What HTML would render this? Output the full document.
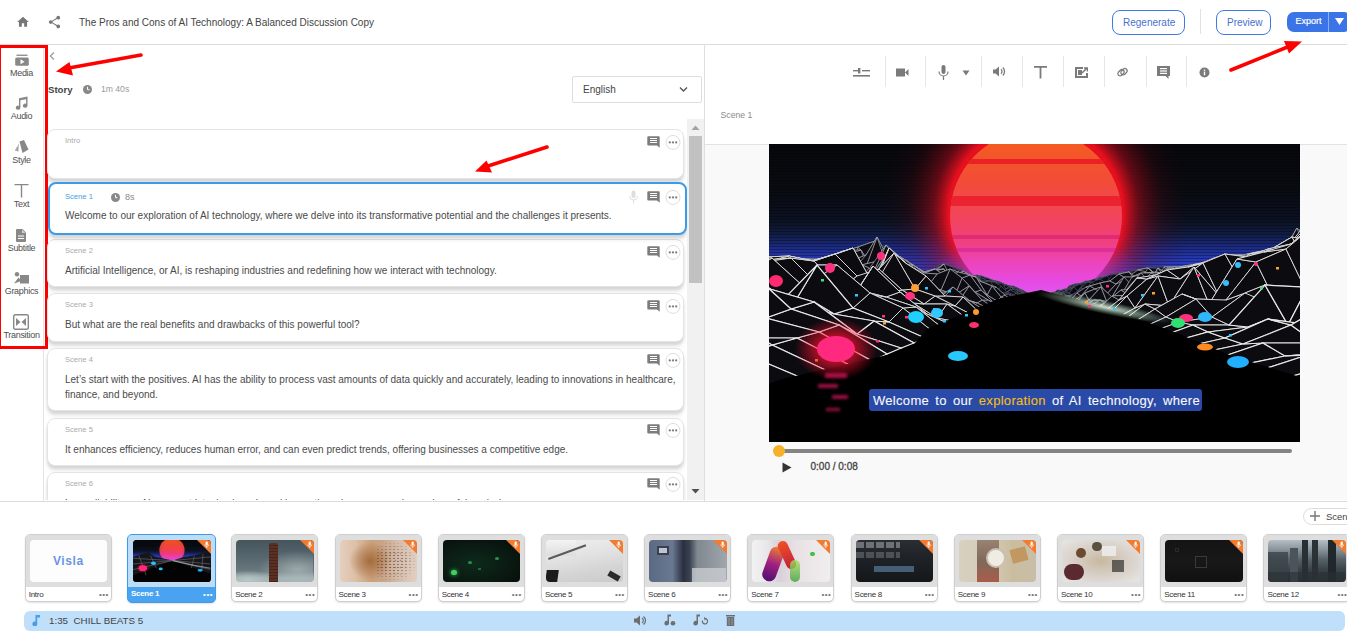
<!DOCTYPE html>
<html><head><meta charset="utf-8">
<style>
*{box-sizing:border-box;margin:0;padding:0}
html,body{width:1347px;height:638px;overflow:hidden;background:#fff;font-family:"Liberation Sans",sans-serif;color:#444;position:relative}
.a{position:absolute}
.t{position:absolute;white-space:nowrap;line-height:1}
.sep{position:absolute;width:1px;background:#e2e2e2}
.card{position:absolute;left:47px;width:637px;background:#fff;border:1px solid #e4e4e4;border-radius:8px;box-shadow:0 3px 3px rgba(0,0,0,.12),0 6px 4px rgba(0,0,0,.05)}
.lbl{position:absolute;left:17px;font-size:7.6px;color:#aaa;line-height:1;white-space:nowrap}
.txt{position:absolute;left:17px;font-size:10px;color:#4a4a4a;line-height:14.5px;white-space:nowrap}
.sb{position:absolute;left:0;width:43px;text-align:center;font-size:9px;letter-spacing:-0.3px;color:#505050;line-height:1}
.th{position:absolute;top:534px;width:87px;height:68px;border:1px solid #cfcfcf;border-radius:5px;background:#fff;box-shadow:0 1px 2px rgba(0,0,0,.12);overflow:hidden}
.th .fr{position:absolute;left:0;top:0;right:0;height:52px;background:#dedede}
.th .im{position:absolute;left:4px;top:5px;width:77.5px;height:42px;border-radius:4px;overflow:hidden}
.th .nm{position:absolute;left:3px;top:55.5px;font-size:8px;letter-spacing:-0.3px;color:#333;line-height:1;white-space:nowrap}
.th .dt{position:absolute;right:2px;top:56px;font-size:8px;color:#777;letter-spacing:0.5px;line-height:1}
.th .cor{position:absolute;right:0;top:0;width:0;height:0;border-style:solid;border-width:0 14px 14px 0;border-color:transparent #f27b2f transparent transparent}
</style></head><body>

<!-- HEADER -->
<div class="a" style="left:0;top:44px;width:1347px;height:1px;background:#dcdcdc"></div>
<svg class="a" style="left:16px;top:15px" width="14" height="14" viewBox="0 0 24 24"><path fill="#777" d="M10 20v-6h4v6h5v-8h3L12 3 2 12h3v8z"/></svg>
<svg class="a" style="left:47px;top:14px" width="15" height="16" viewBox="0 0 24 24"><path fill="#777" d="M18 16.08c-.76 0-1.44.3-1.96.77L8.91 12.7c.05-.23.09-.46.09-.7s-.04-.47-.09-.7l7.05-4.11c.54.5 1.25.81 2.04.81 1.66 0 3-1.34 3-3s-1.34-3-3-3-3 1.34-3 3c0 .24.04.47.09.7L8.04 9.81C7.5 9.31 6.79 9 6 9c-1.66 0-3 1.34-3 3s1.34 3 3 3c.79 0 1.5-.31 2.04-.81l7.12 4.16c-.05.21-.08.43-.08.65 0 1.61 1.31 2.92 2.92 2.92 1.61 0 2.92-1.31 2.92-2.92s-1.31-2.92-2.92-2.92z"/></svg>
<div class="t" style="left:79px;top:17.5px;font-size:10px;color:#444">The Pros and Cons of AI Technology: A Balanced Discussion Copy</div>

<div class="a" style="left:1112px;top:10px;width:73px;height:25px;border:1px solid #3d7be6;border-radius:8px"></div>
<div class="t" style="left:1123px;top:18px;font-size:10px;color:#4a6fd0">Regenerate</div>
<div class="sep" style="left:1200px;top:9px;height:25px"></div>
<div class="a" style="left:1216px;top:10px;width:55px;height:25px;border:1px solid #3d7be6;border-radius:8px"></div>
<div class="t" style="left:1227px;top:18px;font-size:10px;color:#4a6fd0">Preview</div>
<div class="a" style="left:1287px;top:12px;width:64px;height:20px;background:#3b74e6;border-radius:7px"></div>
<div class="a" style="left:1328px;top:12px;width:1px;height:20px;background:#8fb0f0"></div>
<div class="t" style="left:1295.5px;top:16.5px;font-size:9px;color:#fff;-webkit-text-stroke:0.2px #fff">Export</div>
<svg class="a" style="left:1335px;top:18px" width="9" height="7" viewBox="0 0 9 7"><path fill="#fff" d="M0 0h9L4.5 7z"/></svg>

<!-- SIDEBAR -->
<div class="a" style="left:43px;top:45px;width:1px;height:456px;background:#e4e4e4"></div>


<svg class="a" style="left:14.5px;top:54px" width="14" height="12" viewBox="0 0 14 12"><rect x="1.5" y="0.6" width="11" height="1.3" fill="#888"/><rect x="0.2" y="3.6" width="13.6" height="8.2" rx="1.5" fill="#888"/><path d="M5.5 5.2v5l4-2.5z" fill="#fff"/></svg>
<div class="sb" style="top:69px">Media</div>
<svg class="a" style="left:15px;top:96px" width="13" height="14" viewBox="0 0 13 14"><path fill="#888" d="M4 2.2L12.5 0.5v9.2a2.3 2.1 0 1 1-1.4-1.9V3.2L5.4 4.3v7.3A2.3 2.1 0 1 1 4 9.7z"/></svg>
<div class="sb" style="top:112px">Audio</div>
<svg class="a" style="left:14px;top:140px" width="15" height="13" viewBox="0 0 15 13"><path fill="#888" d="M5.5 1.5L10 0l4.5 9.5-6 3.5z"/><path fill="#999" d="M4.8 3.2L2 10.5l2.3 1.2z"/><path fill="#aaa" d="M3.6 5.5L0.8 10.5l1.4.6z"/></svg>
<div class="sb" style="top:156px">Style</div>
<svg class="a" style="left:14px;top:184px" width="15" height="14" viewBox="0 0 15 14"><path fill="#888" d="M0.5 0h14v1.3H8.2V13.5H6.8V1.3H0.5z"/></svg>
<div class="sb" style="top:200px">Text</div>
<svg class="a" style="left:16px;top:229px" width="10" height="13" viewBox="0 0 10 13"><path fill="#888" d="M1 0h5.5L10 3.5V12a1 1 0 0 1-1 1H1a1 1 0 0 1-1-1V1a1 1 0 0 1 1-1z"/><path fill="#fff" d="M6 .5v3.5h3.5z" opacity=".6"/><rect x="2" y="6.5" width="6" height="1" fill="#fff"/><rect x="2" y="9" width="6" height="1" fill="#fff"/></svg>
<div class="sb" style="top:244px">Subtitle</div>
<svg class="a" style="left:14px;top:272px" width="15" height="12" viewBox="0 0 15 12"><circle cx="3" cy="2.2" r="2.2" fill="#888"/><path fill="#888" d="M0 11.5l4.5-6 3 3.5z"/><rect x="6" y="3" width="9" height="8.5" fill="#888"/></svg>
<div class="sb" style="top:287px">Graphics</div>
<svg class="a" style="left:13px;top:314px" width="16" height="16" viewBox="0 0 16 16"><rect x="0.7" y="0.7" width="14.6" height="14.6" rx="1.5" fill="none" stroke="#888" stroke-width="1.4"/><path fill="#888" d="M3 4l4.5 4L3 12zM13 4L8.5 8 13 12z"/></svg>
<div class="sb" style="top:331px">Transition</div>
<!-- red box -->
<div class="a" style="left:-2px;top:45px;width:50px;height:304px;border:3px solid #f00;border-left-width:3px"></div>


<!-- STORY PANEL -->
<div class="a" style="left:44px;top:45px;width:660px;height:455px;overflow:hidden">
<div class="a" style="left:-44px;top:-45px;width:1347px;height:638px">
<svg class="a" style="left:49px;top:52px" width="6" height="8" viewBox="0 0 6 8"><path d="M5 0.5L1.3 4 5 7.5" fill="none" stroke="#999" stroke-width="1.2"/></svg>
<div class="t" style="left:48px;top:84.5px;font-size:9.6px;font-weight:bold;color:#444">Story</div>
<svg class="a" style="left:83px;top:85px" width="9" height="9" viewBox="0 0 9 9"><circle cx="4.5" cy="4.5" r="4.5" fill="#888"/><path d="M4.5 1.8v2.9h2" fill="none" stroke="#fff" stroke-width="1"/></svg>
<div class="t" style="left:101px;top:84.8px;font-size:8.6px;color:#999">1m 40s</div>
<div class="a" style="left:572px;top:76px;width:130px;height:27px;border:1px solid #dedede;border-radius:2px"></div>
<div class="t" style="left:583px;top:85px;font-size:10px;color:#444">English</div>
<svg class="a" style="left:679px;top:86px" width="9" height="7" viewBox="0 0 9 7"><path d="M1 1.5l3.5 3.5L8 1.5" fill="none" stroke="#555" stroke-width="1.4"/></svg>
<div class="card" style="top:129px;height:50px">
<div class="lbl" style="top:6.8px">Intro</div>
</div>
<svg class="a" style="left:647px;top:136px" width="13" height="12" viewBox="0 0 13 12"><path fill="#7c7c7c" d="M1.3 0.3h10.4a1 1 0 0 1 1 1V11.8L10 9.5H1.3a1 1 0 0 1-1-1V1.3a1 1 0 0 1 1-1z"/><rect x="3" y="2" width="7" height="1" fill="#fff"/><rect x="3" y="4" width="7" height="1" fill="#fff"/><rect x="3" y="6" width="7" height="1" fill="#fff"/></svg><svg class="a" style="left:665px;top:134px" width="16" height="16" viewBox="0 0 16 16"><circle cx="8" cy="8.4" r="7" fill="#fff" stroke="#dedede" stroke-width="1"/><circle cx="4.8" cy="8.4" r="1.15" fill="#808080"/><circle cx="8" cy="8.4" r="1.15" fill="#808080"/><circle cx="11.2" cy="8.4" r="1.15" fill="#808080"/></svg>
<div class="card" style="top:239px;height:48px">
<div class="lbl" style="top:6.8px">Scene 2</div>
<div class="txt" style="top:24px">Artificial Intelligence, or AI, is reshaping industries and redefining how we interact with technology.</div>
</div>
<svg class="a" style="left:647px;top:246px" width="13" height="12" viewBox="0 0 13 12"><path fill="#7c7c7c" d="M1.3 0.3h10.4a1 1 0 0 1 1 1V11.8L10 9.5H1.3a1 1 0 0 1-1-1V1.3a1 1 0 0 1 1-1z"/><rect x="3" y="2" width="7" height="1" fill="#fff"/><rect x="3" y="4" width="7" height="1" fill="#fff"/><rect x="3" y="6" width="7" height="1" fill="#fff"/></svg><svg class="a" style="left:665px;top:244px" width="16" height="16" viewBox="0 0 16 16"><circle cx="8" cy="8.4" r="7" fill="#fff" stroke="#dedede" stroke-width="1"/><circle cx="4.8" cy="8.4" r="1.15" fill="#808080"/><circle cx="8" cy="8.4" r="1.15" fill="#808080"/><circle cx="11.2" cy="8.4" r="1.15" fill="#808080"/></svg>
<div class="card" style="top:293px;height:49px">
<div class="lbl" style="top:6.8px">Scene 3</div>
<div class="txt" style="top:24px">But what are the real benefits and drawbacks of this powerful tool?</div>
</div>
<svg class="a" style="left:647px;top:300px" width="13" height="12" viewBox="0 0 13 12"><path fill="#7c7c7c" d="M1.3 0.3h10.4a1 1 0 0 1 1 1V11.8L10 9.5H1.3a1 1 0 0 1-1-1V1.3a1 1 0 0 1 1-1z"/><rect x="3" y="2" width="7" height="1" fill="#fff"/><rect x="3" y="4" width="7" height="1" fill="#fff"/><rect x="3" y="6" width="7" height="1" fill="#fff"/></svg><svg class="a" style="left:665px;top:298px" width="16" height="16" viewBox="0 0 16 16"><circle cx="8" cy="8.4" r="7" fill="#fff" stroke="#dedede" stroke-width="1"/><circle cx="4.8" cy="8.4" r="1.15" fill="#808080"/><circle cx="8" cy="8.4" r="1.15" fill="#808080"/><circle cx="11.2" cy="8.4" r="1.15" fill="#808080"/></svg>
<div class="card" style="top:348px;height:63px">
<div class="lbl" style="top:6.8px">Scene 4</div>
<div class="txt" style="top:24px">Let’s start with the positives. AI has the ability to process vast amounts of data quickly and accurately, leading to innovations in healthcare,</div>
<div class="txt" style="top:38.5px">finance, and beyond.</div>
</div>
<svg class="a" style="left:647px;top:354px" width="13" height="12" viewBox="0 0 13 12"><path fill="#7c7c7c" d="M1.3 0.3h10.4a1 1 0 0 1 1 1V11.8L10 9.5H1.3a1 1 0 0 1-1-1V1.3a1 1 0 0 1 1-1z"/><rect x="3" y="2" width="7" height="1" fill="#fff"/><rect x="3" y="4" width="7" height="1" fill="#fff"/><rect x="3" y="6" width="7" height="1" fill="#fff"/></svg><svg class="a" style="left:665px;top:352px" width="16" height="16" viewBox="0 0 16 16"><circle cx="8" cy="8.4" r="7" fill="#fff" stroke="#dedede" stroke-width="1"/><circle cx="4.8" cy="8.4" r="1.15" fill="#808080"/><circle cx="8" cy="8.4" r="1.15" fill="#808080"/><circle cx="11.2" cy="8.4" r="1.15" fill="#808080"/></svg>
<div class="card" style="top:418px;height:48px">
<div class="lbl" style="top:6.8px">Scene 5</div>
<div class="txt" style="top:24px">It enhances efficiency, reduces human error, and can even predict trends, offering businesses a competitive edge.</div>
</div>
<svg class="a" style="left:647px;top:424px" width="13" height="12" viewBox="0 0 13 12"><path fill="#7c7c7c" d="M1.3 0.3h10.4a1 1 0 0 1 1 1V11.8L10 9.5H1.3a1 1 0 0 1-1-1V1.3a1 1 0 0 1 1-1z"/><rect x="3" y="2" width="7" height="1" fill="#fff"/><rect x="3" y="4" width="7" height="1" fill="#fff"/><rect x="3" y="6" width="7" height="1" fill="#fff"/></svg><svg class="a" style="left:665px;top:422px" width="16" height="16" viewBox="0 0 16 16"><circle cx="8" cy="8.4" r="7" fill="#fff" stroke="#dedede" stroke-width="1"/><circle cx="4.8" cy="8.4" r="1.15" fill="#808080"/><circle cx="8" cy="8.4" r="1.15" fill="#808080"/><circle cx="11.2" cy="8.4" r="1.15" fill="#808080"/></svg>
<div class="card" style="top:472px;height:48px">
<div class="lbl" style="top:6.8px">Scene 6</div>
<div class="txt" style="top:24px">Low reliability on AI may restrict a business’s real innovation, sincere reasoning and careful analysis.</div>
</div>
<svg class="a" style="left:647px;top:478px" width="13" height="12" viewBox="0 0 13 12"><path fill="#7c7c7c" d="M1.3 0.3h10.4a1 1 0 0 1 1 1V11.8L10 9.5H1.3a1 1 0 0 1-1-1V1.3a1 1 0 0 1 1-1z"/><rect x="3" y="2" width="7" height="1" fill="#fff"/><rect x="3" y="4" width="7" height="1" fill="#fff"/><rect x="3" y="6" width="7" height="1" fill="#fff"/></svg><svg class="a" style="left:665px;top:476px" width="16" height="16" viewBox="0 0 16 16"><circle cx="8" cy="8.4" r="7" fill="#fff" stroke="#dedede" stroke-width="1"/><circle cx="4.8" cy="8.4" r="1.15" fill="#808080"/><circle cx="8" cy="8.4" r="1.15" fill="#808080"/><circle cx="11.2" cy="8.4" r="1.15" fill="#808080"/></svg>
<div class="card" style="top:182px;left:48px;width:639px;height:53px;border:2px solid #3a9be8;border-radius:8px">
<div class="lbl" style="top:8.5px;left:15px;color:#3aa0e0">Scene 1</div>
<svg class="a" style="left:61px;top:9px" width="9" height="9" viewBox="0 0 9 9"><circle cx="4.5" cy="4.5" r="4.5" fill="#888"/><path d="M4.5 1.8v2.9h2" fill="none" stroke="#fff" stroke-width="1"/></svg>
<div class="t" style="left:75px;top:9px;font-size:9px;color:#888">8s</div>
<div class="txt" style="top:25px;left:15px">Welcome to our exploration of AI technology, where we delve into its transformative potential and the challenges it presents.</div>
</div>
<svg class="a" style="left:628px;top:190px" width="11" height="14" viewBox="0 0 11 14"><rect x="3.5" y="0.5" width="4" height="7.5" rx="2" fill="#ddd"/><path d="M1.5 6a4 4 0 0 0 8 0M5.5 10v3.5" fill="none" stroke="#ddd" stroke-width="1"/></svg>
<svg class="a" style="left:647px;top:191px" width="13" height="12" viewBox="0 0 13 12"><path fill="#7c7c7c" d="M1.3 0.3h10.4a1 1 0 0 1 1 1V11.8L10 9.5H1.3a1 1 0 0 1-1-1V1.3a1 1 0 0 1 1-1z"/><rect x="3" y="2" width="7" height="1" fill="#fff"/><rect x="3" y="4" width="7" height="1" fill="#fff"/><rect x="3" y="6" width="7" height="1" fill="#fff"/></svg><svg class="a" style="left:665px;top:189px" width="16" height="16" viewBox="0 0 16 16"><circle cx="8" cy="8.4" r="7" fill="#fff" stroke="#dedede" stroke-width="1"/><circle cx="4.8" cy="8.4" r="1.15" fill="#808080"/><circle cx="8" cy="8.4" r="1.15" fill="#808080"/><circle cx="11.2" cy="8.4" r="1.15" fill="#808080"/></svg>
<div class="a" style="left:687px;top:119px;width:17px;height:382px;background:#f1f1f1"></div>
<div class="a" style="left:689px;top:136px;width:13px;height:147px;background:#c1c1c1"></div>
<svg class="a" style="left:691px;top:125px" width="9" height="5" viewBox="0 0 9 5"><path d="M0.5 5L4.5 0.5 8.5 5z" fill="#a3a3a3"/></svg>
<svg class="a" style="left:691px;top:489px" width="9" height="5" viewBox="0 0 9 5"><path d="M0.5 0L4.5 4.5 8.5 0z" fill="#505050"/></svg>
</div></div>
<svg class="a" style="left:0;top:0" width="1347" height="638" viewBox="0 0 1347 638">
<g stroke="#f00" stroke-width="3.6" stroke-linecap="round" fill="#f00">
<line x1="141" y1="55" x2="66" y2="68.5"/>
<line x1="547" y1="147" x2="485" y2="167"/>
<line x1="1231" y1="70" x2="1290" y2="46"/>
</g>
<g fill="#f00">
<path d="M56 71.5L69.5 62 73 75.5z"/>
<path d="M475 171.5L486.5 160.5 492 172.5z"/>
<path d="M1302 41.5L1284 41 1289 53.5z"/>
</g></svg>

<!-- RIGHT PANEL -->
<div class="a" style="left:704px;top:45px;width:1px;height:456px;background:#dedede"></div>
<div class="sep" style="left:885px;top:56px;height:31px;background:#e6e6e6"></div>
<div class="sep" style="left:925px;top:56px;height:31px;background:#e6e6e6"></div>
<div class="sep" style="left:981px;top:56px;height:31px;background:#e6e6e6"></div>
<div class="sep" style="left:1022px;top:56px;height:31px;background:#e6e6e6"></div>
<div class="sep" style="left:1063px;top:56px;height:31px;background:#e6e6e6"></div>
<div class="sep" style="left:1104px;top:56px;height:31px;background:#e6e6e6"></div>
<div class="sep" style="left:1146px;top:56px;height:31px;background:#e6e6e6"></div>
<div class="sep" style="left:1186px;top:56px;height:31px;background:#e6e6e6"></div>
<svg class="a" style="left:853px;top:68px" width="17" height="10" viewBox="0 0 17 10"><rect x="0" y="2" width="5" height="1.4" fill="#7a7a7a"/><rect x="5" y="0" width="2.4" height="5.4" fill="#7a7a7a"/><rect x="9" y="2" width="8" height="1.4" fill="#7a7a7a"/><rect x="0" y="7" width="17" height="1.6" fill="#7a7a7a"/></svg>
<svg class="a" style="left:896px;top:68px" width="13" height="9" viewBox="0 0 13 9"><rect x="0" y="0.5" width="9" height="8" fill="#7a7a7a"/><path d="M9 4.5L12.5 1v7z" fill="#7a7a7a"/></svg>
<svg class="a" style="left:938px;top:65px" width="11" height="15" viewBox="0 0 11 15"><rect x="3.5" y="0" width="4" height="9" rx="2" fill="#7a7a7a"/><path d="M1 6.5a4.5 4.5 0 0 0 9 0M5.5 11v4" fill="none" stroke="#7a7a7a" stroke-width="1.2"/></svg>
<svg class="a" style="left:962px;top:70px" width="8" height="6" viewBox="0 0 8 6"><path d="M0.5 0.5h7L4 5.5z" fill="#7a7a7a"/></svg>
<svg class="a" style="left:993px;top:65px" width="13" height="13" viewBox="0 0 13 13"><path d="M0 4.5h2.5L6 1.5v10L2.5 8.5H0z" fill="#7a7a7a"/><path d="M8 4.3a3 3 0 0 1 0 4.4M9.8 2.5a5.5 5.5 0 0 1 0 8" fill="none" stroke="#7a7a7a" stroke-width="1.3"/></svg>
<svg class="a" style="left:1034px;top:66px" width="13" height="13" viewBox="0 0 13 13"><path d="M0 0h13v1.8H7.4V12.5H5.6V1.8H0z" fill="#7a7a7a"/></svg>
<svg class="a" style="left:1075px;top:67px" width="13" height="11" viewBox="0 0 13 11"><path d="M0 0h8v2H2v7h9V6h2v5H0z" fill="#7a7a7a"/><path d="M7 6L11.5 1.5M9 1h3.5v3.5" fill="none" stroke="#7a7a7a" stroke-width="1.6"/><rect x="3" y="3" width="4" height="5" fill="#7a7a7a"/></svg>
<svg class="a" style="left:1116px;top:66px" width="13" height="13" viewBox="0 0 13 13"><g fill="none" stroke="#7a7a7a" stroke-width="1.2"><rect x="1.5" y="4.5" width="7" height="4.5" rx="2.25" transform="rotate(-45 5 6.75)"/><rect x="4.5" y="3.5" width="7" height="4.5" rx="2.25" transform="rotate(-45 8 5.75)"/></g></svg>
<svg class="a" style="left:1157px;top:66px" width="13" height="13" viewBox="0 0 13 13"><path fill="#7a7a7a" d="M0 0h13v10h-1.5v3L8.5 10H0z"/><rect x="3" y="2" width="7" height="1.2" fill="#fff"/><rect x="3" y="4.4" width="7" height="1.2" fill="#fff"/><rect x="3" y="6.8" width="7" height="1.2" fill="#fff"/></svg>
<svg class="a" style="left:1199px;top:67px" width="11" height="11" viewBox="0 0 11 11"><circle cx="5.5" cy="5.5" r="5" fill="#7a7a7a"/><rect x="4.8" y="4.6" width="1.4" height="3.6" fill="#fff"/><rect x="4.8" y="2.6" width="1.4" height="1.3" fill="#fff"/></svg>
<div class="t" style="left:720.5px;top:111px;font-size:8.7px;color:#8a8a8a">Scene 1</div>
<div class="a" style="left:705px;top:144px;width:642px;height:356px;background:#f9f9f9;border-top:1px solid #e2e2e2"></div>
<svg class="a" style="left:769px;top:144px" width="531" height="298" viewBox="0 0 531 298">
<defs>
<linearGradient id="sky" x1="0" y1="0" x2="0" y2="1">
<stop offset="0" stop-color="#06080c"/><stop offset="0.15" stop-color="#080b11"/><stop offset="0.25" stop-color="#0b1120"/><stop offset="0.3" stop-color="#111c40"/><stop offset="0.35" stop-color="#1c2c88"/><stop offset="0.40" stop-color="#2a3cc0"/><stop offset="0.45" stop-color="#3040d0"/><stop offset="0.5" stop-color="#202a80"/><stop offset="0.55" stop-color="#000"/><stop offset="1" stop-color="#000"/>
</linearGradient>
<linearGradient id="sun" x1="0" y1="0" x2="0" y2="1">
<stop offset="0" stop-color="#f4601a"/><stop offset="0.3" stop-color="#f24c38"/><stop offset="0.5" stop-color="#f2445a"/><stop offset="0.65" stop-color="#f0407e"/><stop offset="0.78" stop-color="#ec44c0"/><stop offset="0.9" stop-color="#e44ce8"/><stop offset="1" stop-color="#e060f0"/>
</linearGradient>
<radialGradient id="halo" cx="0.5" cy="0.5" r="0.5">
<stop offset="0.56" stop-color="#ff1020" stop-opacity="0.9"/><stop offset="0.66" stop-color="#c00c1c" stop-opacity="0.5"/><stop offset="0.82" stop-color="#600812" stop-opacity="0.2"/><stop offset="1" stop-color="#300008" stop-opacity="0"/>
</radialGradient>
<radialGradient id="halo2" cx="0.5" cy="0.5" r="0.5">
<stop offset="0.4" stop-color="#a050f0" stop-opacity="0.9"/><stop offset="1" stop-color="#5040f0" stop-opacity="0"/>
</radialGradient>
<radialGradient id="rg" cx="0.5" cy="0.5" r="0.5"><stop offset="0.3" stop-color="#ff1030" stop-opacity="0.8"/><stop offset="1" stop-color="#ff1030" stop-opacity="0"/></radialGradient>
<radialGradient id="gl" cx="0.5" cy="0.5" r="0.5"><stop offset="0" stop-color="#f0fff0" stop-opacity="0.9"/><stop offset="1" stop-color="#c0ffd0" stop-opacity="0"/></radialGradient>
<filter id="bb" x="-30%" y="-30%" width="160%" height="160%"><feGaussianBlur stdDeviation="1.5"/></filter><clipPath id="sc"><circle cx="267" cy="72" r="86"/></clipPath>
<pattern id="scan" width="4" height="3" patternUnits="userSpaceOnUse"><rect width="4" height="1" fill="#000" opacity="0.3"/></pattern>
</defs>
<style>.w0{fill:#0b0b10;stroke:#e8e8e8;stroke-width:1.2}.w1{fill:#0b0b10;stroke:#d8d8d8;stroke-width:1}.w2{fill:#0c0c12;stroke:#a8a8b0;stroke-width:.7}.w3{fill:#0c0d14;stroke:#505868;stroke-width:.5}</style>
<rect width="531" height="298" fill="url(#sky)"/>
<rect width="531" height="150" fill="url(#scan)"/>
<circle cx="267" cy="68" r="156" fill="url(#halo)"/>
<ellipse cx="267" cy="134" rx="106" ry="50" fill="url(#halo2)"/>
<circle cx="267" cy="72" r="86" fill="url(#sun)"/>
<g clip-path="url(#sc)">
<rect x="150" y="15" width="240" height="5" fill="#e81a22" opacity="0.85"/>
<rect x="150" y="52" width="240" height="10" fill="#e81a2a" opacity="0.8"/>
<rect x="150" y="91" width="240" height="4" fill="#d41870" opacity="0.55"/>
<rect x="150" y="104" width="240" height="4" fill="#c81a98" opacity="0.45"/>
</g>
<path class="w3" d="M264,151L261,150L262,150L265,151Z"/><path class="w3" d="M261,150L259,150L260,150L262,150Z"/><path class="w3" d="M259,150L256,148L258,149L260,150Z"/><path class="w3" d="M256,148L254,147L256,148L258,149Z"/><path class="w3" d="M254,147L251,146L253,146L256,148Z"/><path class="w3" d="M251,146L249,147L251,145L253,146Z"/><path class="w3" d="M249,147L246,146L249,144L251,145Z"/><path class="w3" d="M246,146L244,142L246,143L249,144Z"/><path class="w3" d="M244,142L241,143L244,145L246,143Z"/><path class="w3" d="M241,143L239,144L242,144L244,145Z"/><path class="w3" d="M239,144L236,144L240,142L242,144Z"/><path class="w3" d="M236,144L234,141L237,141L240,142Z"/><path class="w3" d="M234,141L231,140L235,145L237,141Z"/><path class="w3" d="M231,140L229,143L233,140L235,145Z"/><path class="w3" d="M229,143L226,140L231,140L233,140Z"/><path class="w3" d="M226,140L224,140L228,139L231,140Z"/><path class="w3" d="M224,140L221,138L226,142L228,139Z"/><path class="w3" d="M221,138L219,139L224,140L226,142Z"/><path class="w3" d="M219,139L216,141L221,137L224,140Z"/><path class="w3" d="M216,141L214,141L219,137L221,137Z"/><path class="w3" d="M214,141L211,137L217,139L219,137Z"/><path class="w3" d="M211,137L209,142L215,136L217,139Z"/><path class="w3" d="M209,142L206,135L212,135L215,136Z"/><path class="w3" d="M206,135L204,144L210,136L212,135Z"/><path class="w3" d="M204,144L201,142L208,137L210,136Z"/><path class="w3" d="M201,142L199,138L205,134L208,137Z"/><path class="w3" d="M199,138L196,133L203,143L205,134Z"/><path class="w3" d="M196,133L194,135L201,139L203,143Z"/><path class="w3" d="M194,135L191,134L199,137L201,139Z"/><path class="w3" d="M191,134L189,134L196,143L199,137Z"/><path class="w3" d="M189,134L186,135L194,135L196,143Z"/><path class="w3" d="M186,135L184,143L192,144L194,135Z"/><path class="w3" d="M184,143L181,134L190,137L192,144Z"/><path class="w3" d="M181,134L179,142L187,142L190,137Z"/><path class="w3" d="M179,142L176,143L185,142L187,142Z"/><path class="w3" d="M176,143L174,146L183,138L185,142Z"/><path class="w3" d="M174,146L171,145L180,143L183,138Z"/><path class="w3" d="M171,145L169,133L178,139L180,143Z"/><path class="w3" d="M169,133L166,139L176,132L178,139Z"/><path class="w3" d="M166,139L164,144L174,132L176,132Z"/><path class="w3" d="M164,144L161,145L171,142L174,132Z"/><path class="w3" d="M161,145L159,136L169,140L171,142Z"/><path class="w3" d="M159,136L156,136L167,135L169,140Z"/><path class="w3" d="M156,136L154,133L164,142L167,135Z"/><path class="w3" d="M154,133L151,144L162,136L164,142Z"/><path class="w3" d="M151,144L149,144L160,143L162,136Z"/><path class="w3" d="M149,144L146,142L158,139L160,143Z"/><path class="w3" d="M146,142L144,143L155,142L158,139Z"/><path class="w3" d="M144,143L141,145L153,148L155,142Z"/><path class="w3" d="M141,145L139,143L151,147L153,148Z"/><path class="w3" d="M139,143L136,137L149,147L151,147Z"/><path class="w3" d="M136,137L134,143L146,142L149,147Z"/><path class="w3" d="M134,143L131,143L144,142L146,142Z"/><path class="w3" d="M131,143L129,137L142,131L144,142Z"/><path class="w3" d="M129,137L126,139L139,136L142,131Z"/><path class="w3" d="M126,139L124,142L137,145L139,136Z"/><path class="w3" d="M124,142L121,138L135,136L137,145Z"/><path class="w3" d="M121,138L119,137L133,142L135,136Z"/><path class="w3" d="M119,137L116,139L130,139L133,142Z"/><path class="w3" d="M116,139L114,138L128,135L130,139Z"/><path class="w3" d="M114,138L111,143L126,132L128,135Z"/><path class="w3" d="M111,143L109,136L123,132L126,132Z"/><path class="w3" d="M109,136L106,141L121,139L123,132Z"/><path class="w3" d="M106,141L104,141L119,142L121,139Z"/><path class="w3" d="M104,141L101,145L117,140L119,142Z"/><path class="w3" d="M101,145L99,133L114,141L117,140Z"/><path class="w3" d="M99,133L96,137L112,134L114,141Z"/><path class="w3" d="M96,137L94,139L110,138L112,134Z"/><path class="w3" d="M94,139L91,136L107,135L110,138Z"/><path class="w3" d="M91,136L89,130L105,143L107,135Z"/><path class="w3" d="M89,130L86,141L103,134L105,143Z"/><path class="w3" d="M86,141L84,138L101,131L103,134Z"/><path class="w3" d="M84,138L81,134L98,142L101,131Z"/><path class="w3" d="M81,134L79,139L96,136L98,142Z"/><path class="w3" d="M280,151L283,150L282,149L279,151Z"/><path class="w3" d="M283,150L285,149L284,148L282,149Z"/><path class="w3" d="M285,149L288,147L286,148L284,148Z"/><path class="w3" d="M288,147L290,146L288,149L286,148Z"/><path class="w3" d="M290,146L293,147L291,147L288,149Z"/><path class="w3" d="M293,147L295,146L293,147L291,147Z"/><path class="w3" d="M295,146L298,145L295,147L293,147Z"/><path class="w3" d="M298,145L300,142L298,145L295,147Z"/><path class="w3" d="M300,142L303,141L300,144L298,145Z"/><path class="w3" d="M303,141L305,141L302,144L300,144Z"/><path class="w3" d="M305,141L308,141L304,146L302,144Z"/><path class="w3" d="M308,141L310,141L307,145L304,146Z"/><path class="w3" d="M310,141L313,144L309,140L307,145Z"/><path class="w3" d="M313,144L315,139L311,142L309,140Z"/><path class="w3" d="M315,139L318,143L313,144L311,142Z"/><path class="w3" d="M318,143L320,139L316,142L313,144Z"/><path class="w3" d="M320,139L323,142L318,142L316,142Z"/><path class="w3" d="M323,142L325,145L320,142L318,142Z"/><path class="w3" d="M325,145L328,139L323,144L320,142Z"/><path class="w3" d="M328,139L330,141L325,139L323,144Z"/><path class="w3" d="M330,141L333,137L327,137L325,139Z"/><path class="w3" d="M333,137L335,141L329,138L327,137Z"/><path class="w3" d="M335,141L338,137L332,136L329,138Z"/><path class="w3" d="M338,137L340,138L334,137L332,136Z"/><path class="w3" d="M340,138L343,144L336,139L334,137Z"/><path class="w3" d="M343,144L345,141L339,140L336,139Z"/><path class="w3" d="M345,141L348,141L341,137L339,140Z"/><path class="w3" d="M348,141L350,136L343,141L341,137Z"/><path class="w3" d="M350,136L353,135L345,144L343,141Z"/><path class="w3" d="M353,135L355,134L348,139L345,144Z"/><path class="w3" d="M355,134L358,142L350,136L348,139Z"/><path class="w3" d="M358,142L360,142L352,137L350,136Z"/><path class="w3" d="M360,142L363,140L354,145L352,137Z"/><path class="w3" d="M363,140L365,141L357,136L354,145Z"/><path class="w3" d="M365,141L368,142L359,145L357,136Z"/><path class="w3" d="M368,142L370,136L361,140L359,145Z"/><path class="w3" d="M370,136L373,145L364,144L361,140Z"/><path class="w3" d="M373,145L375,139L366,143L364,144Z"/><path class="w3" d="M375,139L378,144L368,143L366,143Z"/><path class="w3" d="M378,144L380,141L370,138L368,143Z"/><path class="w3" d="M380,141L383,141L373,136L370,138Z"/><path class="w3" d="M383,141L385,138L375,133L373,136Z"/><path class="w3" d="M385,138L388,132L377,138L375,133Z"/><path class="w3" d="M388,132L390,136L380,145L377,138Z"/><path class="w3" d="M390,136L393,140L382,146L380,145Z"/><path class="w3" d="M393,140L395,133L384,145L382,146Z"/><path class="w3" d="M395,133L398,142L386,145L384,145Z"/><path class="w3" d="M398,142L400,143L389,144L386,145Z"/><path class="w3" d="M400,143L403,138L391,142L389,144Z"/><path class="w3" d="M403,138L405,135L393,143L391,142Z"/><path class="w3" d="M405,135L408,135L395,134L393,143Z"/><path class="w3" d="M408,135L410,137L398,140L395,134Z"/><path class="w3" d="M410,137L413,134L400,139L398,140Z"/><path class="w3" d="M413,134L415,139L402,135L400,139Z"/><path class="w3" d="M415,139L418,132L405,143L402,135Z"/><path class="w3" d="M418,132L420,134L407,139L405,143Z"/><path class="w3" d="M420,134L423,134L409,145L407,139Z"/><path class="w3" d="M423,134L425,137L411,138L409,145Z"/><path class="w3" d="M425,137L428,132L414,132L411,138Z"/><path class="w3" d="M428,132L430,138L416,137L414,132Z"/><path class="w3" d="M430,138L433,132L418,141L416,137Z"/><path class="w3" d="M433,132L435,139L421,136L418,141Z"/><path class="w3" d="M435,139L438,132L423,138L421,136Z"/><path class="w3" d="M438,132L440,140L425,138L423,138Z"/><path class="w3" d="M440,140L443,137L427,137L425,138Z"/><path class="w3" d="M443,137L445,137L430,135L427,137Z"/><path class="w3" d="M445,137L448,137L432,132L430,135Z"/><path class="w3" d="M448,137L450,132L434,130L432,132Z"/><path class="w3" d="M450,132L453,132L437,131L434,130Z"/><path class="w3" d="M453,132L455,141L439,134L437,131Z"/><path class="w3" d="M455,141L458,135L441,136L439,134Z"/><path class="w3" d="M458,135L460,138L443,135L441,136Z"/><path class="w3" d="M460,138L463,140L446,144L443,135Z"/><path class="w3" d="M463,140L465,145L448,145L446,144Z"/><path class="w3" d="M263,151L260,150L261,150L264,151Z"/><path class="w3" d="M260,150L258,149L259,150L261,150Z"/><path class="w3" d="M258,149L255,147L256,148L259,150Z"/><path class="w3" d="M255,147L252,148L254,147L256,148Z"/><path class="w3" d="M252,148L249,146L251,146L254,147Z"/><path class="w3" d="M249,146L247,143L249,147L251,146Z"/><path class="w3" d="M247,143L244,144L246,146L249,147Z"/><path class="w3" d="M244,144L241,142L244,142L246,146Z"/><path class="w3" d="M241,142L238,142L241,143L244,142Z"/><path class="w3" d="M238,142L236,142L239,144L241,143Z"/><path class="w3" d="M236,142L233,144L236,144L239,144Z"/><path class="w3" d="M233,144L230,141L234,141L236,144Z"/><path class="w3" d="M230,141L227,139L231,140L234,141Z"/><path class="w3" d="M227,139L225,139L229,143L231,140Z"/><path class="w3" d="M225,139L222,142L226,140L229,143Z"/><path class="w3" d="M222,142L219,140L224,140L226,140Z"/><path class="w3" d="M219,140L216,138L221,138L224,140Z"/><path class="w3" d="M216,138L214,140L219,139L221,138Z"/><path class="w3" d="M214,140L211,138L216,141L219,139Z"/><path class="w3" d="M211,138L208,137L214,141L216,141Z"/><path class="w3" d="M208,137L205,146L211,137L214,141Z"/><path class="w3" d="M205,146L203,142L209,142L211,137Z"/><path class="w3" d="M203,142L200,136L206,135L209,142Z"/><path class="w3" d="M200,136L197,142L204,144L206,135Z"/><path class="w3" d="M197,142L194,145L201,142L204,144Z"/><path class="w3" d="M194,145L191,134L199,138L201,142Z"/><path class="w3" d="M191,134L189,137L196,133L199,138Z"/><path class="w3" d="M189,137L186,130L194,135L196,133Z"/><path class="w3" d="M186,130L183,135L191,134L194,135Z"/><path class="w3" d="M183,135L180,141L189,134L191,134Z"/><path class="w3" d="M180,141L178,134L186,135L189,134Z"/><path class="w3" d="M178,134L175,139L184,143L186,135Z"/><path class="w3" d="M175,139L172,132L181,134L184,143Z"/><path class="w3" d="M172,132L169,132L179,142L181,134Z"/><path class="w3" d="M169,132L167,134L176,143L179,142Z"/><path class="w3" d="M167,134L164,145L174,146L176,143Z"/><path class="w3" d="M164,145L161,145L171,145L174,146Z"/><path class="w3" d="M161,145L158,136L169,133L171,145Z"/><path class="w3" d="M158,136L156,142L166,139L169,133Z"/><path class="w3" d="M156,142L153,143L164,144L166,139Z"/><path class="w3" d="M153,143L150,145L161,145L164,144Z"/><path class="w3" d="M150,145L147,142L159,136L161,145Z"/><path class="w3" d="M147,142L145,135L156,136L159,136Z"/><path class="w3" d="M145,135L142,130L154,133L156,136Z"/><path class="w3" d="M142,130L139,141L151,144L154,133Z"/><path class="w3" d="M139,141L136,143L149,144L151,144Z"/><path class="w3" d="M136,143L134,133L146,142L149,144Z"/><path class="w3" d="M134,133L131,142L144,143L146,142Z"/><path class="w3" d="M131,142L128,136L141,145L144,143Z"/><path class="w3" d="M128,136L125,135L139,143L141,145Z"/><path class="w3" d="M125,135L123,131L136,137L139,143Z"/><path class="w3" d="M123,131L120,143L134,143L136,137Z"/><path class="w3" d="M120,143L117,136L131,143L134,143Z"/><path class="w3" d="M117,136L114,138L129,137L131,143Z"/><path class="w3" d="M114,138L112,132L126,139L129,137Z"/><path class="w3" d="M112,132L109,140L124,142L126,139Z"/><path class="w3" d="M109,140L106,134L121,138L124,142Z"/><path class="w3" d="M106,134L103,141L119,137L121,138Z"/><path class="w3" d="M103,141L101,136L116,139L119,137Z"/><path class="w3" d="M101,136L98,129L114,138L116,139Z"/><path class="w3" d="M98,129L95,139L111,143L114,138Z"/><path class="w3" d="M95,139L92,139L109,136L111,143Z"/><path class="w3" d="M92,139L89,130L106,141L109,136Z"/><path class="w3" d="M89,130L87,135L104,141L106,141Z"/><path class="w3" d="M87,135L84,144L101,145L104,141Z"/><path class="w3" d="M84,144L81,142L99,133L101,145Z"/><path class="w3" d="M81,142L78,140L96,137L99,133Z"/><path class="w3" d="M78,140L76,140L94,139L96,137Z"/><path class="w3" d="M76,140L73,130L91,136L94,139Z"/><path class="w3" d="M73,130L70,132L89,130L91,136Z"/><path class="w3" d="M70,132L67,128L86,141L89,130Z"/><path class="w3" d="M67,128L65,133L84,138L86,141Z"/><path class="w3" d="M65,133L62,134L81,134L84,138Z"/><path class="w3" d="M62,134L59,138L79,139L81,134Z"/><path class="w3" d="M281,151L284,150L283,150L280,151Z"/><path class="w3" d="M284,150L286,148L285,149L283,150Z"/><path class="w3" d="M286,148L289,146L288,147L285,149Z"/><path class="w3" d="M289,146L292,147L290,146L288,147Z"/><path class="w3" d="M292,147L295,145L293,147L290,146Z"/><path class="w3" d="M295,145L297,145L295,146L293,147Z"/><path class="w3" d="M297,145L300,144L298,145L295,146Z"/><path class="w3" d="M300,144L303,143L300,142L298,145Z"/><path class="w3" d="M303,143L306,142L303,141L300,142Z"/><path class="w3" d="M306,142L308,140L305,141L303,141Z"/><path class="w3" d="M308,140L311,143L308,141L305,141Z"/><path class="w3" d="M311,143L314,141L310,141L308,141Z"/><path class="w3" d="M314,141L317,139L313,144L310,141Z"/><path class="w3" d="M317,139L319,140L315,139L313,144Z"/><path class="w3" d="M319,140L322,138L318,143L315,139Z"/><path class="w3" d="M322,138L325,140L320,139L318,143Z"/><path class="w3" d="M325,140L328,141L323,142L320,139Z"/><path class="w3" d="M328,141L330,138L325,145L323,142Z"/><path class="w3" d="M330,138L333,138L328,139L325,145Z"/><path class="w3" d="M333,138L336,139L330,141L328,139Z"/><path class="w3" d="M336,139L339,135L333,137L330,141Z"/><path class="w3" d="M339,135L341,142L335,141L333,137Z"/><path class="w3" d="M341,142L344,135L338,137L335,141Z"/><path class="w3" d="M344,135L347,136L340,138L338,137Z"/><path class="w3" d="M347,136L350,136L343,144L340,138Z"/><path class="w3" d="M350,136L353,138L345,141L343,144Z"/><path class="w3" d="M353,138L355,135L348,141L345,141Z"/><path class="w3" d="M355,135L358,143L350,136L348,141Z"/><path class="w3" d="M358,143L361,134L353,135L350,136Z"/><path class="w3" d="M361,134L364,133L355,134L353,135Z"/><path class="w3" d="M364,133L366,139L358,142L355,134Z"/><path class="w3" d="M366,139L369,135L360,142L358,142Z"/><path class="w3" d="M369,135L372,135L363,140L360,142Z"/><path class="w3" d="M372,135L375,138L365,141L363,140Z"/><path class="w3" d="M375,138L377,133L368,142L365,141Z"/><path class="w3" d="M377,133L380,139L370,136L368,142Z"/><path class="w3" d="M380,139L383,143L373,145L370,136Z"/><path class="w3" d="M383,143L386,137L375,139L373,145Z"/><path class="w3" d="M386,137L388,133L378,144L375,139Z"/><path class="w3" d="M388,133L391,143L380,141L378,144Z"/><path class="w3" d="M391,143L394,138L383,141L380,141Z"/><path class="w3" d="M394,138L397,133L385,138L383,141Z"/><path class="w3" d="M397,133L399,143L388,132L385,138Z"/><path class="w3" d="M399,143L402,132L390,136L388,132Z"/><path class="w3" d="M402,132L405,139L393,140L390,136Z"/><path class="w3" d="M405,139L408,139L395,133L393,140Z"/><path class="w3" d="M408,139L410,134L398,142L395,133Z"/><path class="w3" d="M410,134L413,136L400,143L398,142Z"/><path class="w3" d="M413,136L416,140L403,138L400,143Z"/><path class="w3" d="M416,140L419,142L405,135L403,138Z"/><path class="w3" d="M419,142L421,138L408,135L405,135Z"/><path class="w3" d="M421,138L424,131L410,137L408,135Z"/><path class="w3" d="M424,131L427,130L413,134L410,137Z"/><path class="w3" d="M427,130L430,133L415,139L413,134Z"/><path class="w3" d="M430,133L432,133L418,132L415,139Z"/><path class="w3" d="M432,133L435,133L420,134L418,132Z"/><path class="w3" d="M435,133L438,131L423,134L420,134Z"/><path class="w3" d="M438,131L441,142L425,137L423,134Z"/><path class="w3" d="M441,142L443,143L428,132L425,137Z"/><path class="w3" d="M443,143L446,133L430,138L428,132Z"/><path class="w3" d="M446,133L449,145L433,132L430,138Z"/><path class="w3" d="M449,145L452,138L435,139L433,132Z"/><path class="w3" d="M452,138L455,139L438,132L435,139Z"/><path class="w3" d="M455,139L457,131L440,140L438,132Z"/><path class="w3" d="M457,131L460,136L443,137L440,140Z"/><path class="w3" d="M460,136L463,141L445,137L443,137Z"/><path class="w3" d="M463,141L466,144L448,137L445,137Z"/><path class="w3" d="M466,144L468,137L450,132L448,137Z"/><path class="w3" d="M468,137L471,136L453,132L450,132Z"/><path class="w3" d="M471,136L474,138L455,141L453,132Z"/><path class="w3" d="M474,138L477,137L458,135L455,141Z"/><path class="w3" d="M477,137L479,144L460,138L458,135Z"/><path class="w3" d="M479,144L482,141L463,140L460,138Z"/><path class="w3" d="M482,141L485,133L465,145L463,140Z"/><path class="w3" d="M262,151L259,149L260,150L263,151Z"/><path class="w3" d="M259,149L256,148L258,149L260,150Z"/><path class="w3" d="M256,148L253,146L255,147L258,149Z"/><path class="w3" d="M253,146L250,148L252,148L255,147Z"/><path class="w3" d="M250,148L247,148L249,146L252,148Z"/><path class="w3" d="M247,148L244,147L247,143L249,146Z"/><path class="w3" d="M244,147L241,142L244,144L247,143Z"/><path class="w3" d="M241,142L238,144L241,142L244,144Z"/><path class="w3" d="M238,144L235,143L238,142L241,142Z"/><path class="w3" d="M235,143L232,140L236,142L238,142Z"/><path class="w3" d="M232,140L229,140L233,144L236,142Z"/><path class="w3" d="M229,140L226,141L230,141L233,144Z"/><path class="w3" d="M226,141L223,140L227,139L230,141Z"/><path class="w3" d="M223,140L220,141L225,139L227,139Z"/><path class="w3" d="M220,141L217,138L222,142L225,139Z"/><path class="w3" d="M217,138L214,140L219,140L222,142Z"/><path class="w3" d="M214,140L211,140L216,138L219,140Z"/><path class="w3" d="M211,140L208,141L214,140L216,138Z"/><path class="w3" d="M208,141L205,139L211,138L214,140Z"/><path class="w3" d="M205,139L202,140L208,137L211,138Z"/><path class="w3" d="M202,140L199,146L205,146L208,137Z"/><path class="w3" d="M199,146L196,141L203,142L205,146Z"/><path class="w3" d="M196,141L193,136L200,136L203,142Z"/><path class="w3" d="M193,136L190,141L197,142L200,136Z"/><path class="w3" d="M190,141L186,143L194,145L197,142Z"/><path class="w3" d="M186,143L183,131L191,134L194,145Z"/><path class="w3" d="M183,131L180,135L189,137L191,134Z"/><path class="w3" d="M180,135L177,135L186,130L189,137Z"/><path class="w3" d="M177,135L174,139L183,135L186,130Z"/><path class="w3" d="M174,139L171,129L180,141L183,135Z"/><path class="w3" d="M171,129L168,131L178,134L180,141Z"/><path class="w3" d="M168,131L165,133L175,139L178,134Z"/><path class="w3" d="M165,133L162,134L172,132L175,139Z"/><path class="w3" d="M162,134L159,135L169,132L172,132Z"/><path class="w3" d="M159,135L156,136L167,134L169,132Z"/><path class="w3" d="M156,136L153,138L164,145L167,134Z"/><path class="w3" d="M153,138L150,138L161,145L164,145Z"/><path class="w3" d="M150,138L147,136L158,136L161,145Z"/><path class="w3" d="M147,136L144,137L156,142L158,136Z"/><path class="w3" d="M144,137L141,137L153,143L156,142Z"/><path class="w3" d="M141,137L138,136L150,145L153,143Z"/><path class="w3" d="M138,136L135,131L147,142L150,145Z"/><path class="w3" d="M135,131L132,128L145,135L147,142Z"/><path class="w3" d="M132,128L129,139L142,130L145,135Z"/><path class="w3" d="M129,139L126,144L139,141L142,130Z"/><path class="w3" d="M126,144L123,140L136,143L139,141Z"/><path class="w3" d="M123,140L120,144L134,133L136,143Z"/><path class="w3" d="M120,144L117,131L131,142L134,133Z"/><path class="w3" d="M117,131L114,133L128,136L131,142Z"/><path class="w3" d="M114,133L111,139L125,135L128,136Z"/><path class="w3" d="M111,139L108,140L123,131L125,135Z"/><path class="w3" d="M108,140L105,129L120,143L123,131Z"/><path class="w3" d="M105,129L102,129L117,136L120,143Z"/><path class="w3" d="M102,129L99,131L114,138L117,136Z"/><path class="w3" d="M99,131L95,131L112,132L114,138Z"/><path class="w3" d="M95,131L92,130L109,140L112,132Z"/><path class="w3" d="M92,130L89,137L106,134L109,140Z"/><path class="w3" d="M89,137L86,138L103,141L106,134Z"/><path class="w3" d="M86,138L83,134L101,136L103,141Z"/><path class="w3" d="M83,134L80,128L98,129L101,136Z"/><path class="w3" d="M80,128L77,125L95,139L98,129Z"/><path class="w3" d="M77,125L74,127L92,139L95,139Z"/><path class="w3" d="M74,127L71,129L89,130L92,139Z"/><path class="w3" d="M71,129L68,144L87,135L89,130Z"/><path class="w3" d="M68,144L65,141L84,144L87,135Z"/><path class="w3" d="M65,141L62,130L81,142L84,144Z"/><path class="w3" d="M62,130L59,135L78,140L81,142Z"/><path class="w3" d="M59,135L56,137L76,140L78,140Z"/><path class="w3" d="M56,137L53,138L73,130L76,140Z"/><path class="w3" d="M53,138L50,128L70,132L73,130Z"/><path class="w3" d="M50,128L47,133L67,128L70,132Z"/><path class="w3" d="M47,133L44,127L65,133L67,128Z"/><path class="w3" d="M44,127L41,143L62,134L65,133Z"/><path class="w3" d="M41,143L38,128L59,138L62,134Z"/><path class="w3" d="M282,151L285,150L284,150L281,151Z"/><path class="w3" d="M285,150L288,148L286,148L284,150Z"/><path class="w3" d="M288,148L291,147L289,146L286,148Z"/><path class="w3" d="M291,147L294,148L292,147L289,146Z"/><path class="w3" d="M294,148L297,146L295,145L292,147Z"/><path class="w3" d="M297,146L300,146L297,145L295,145Z"/><path class="w3" d="M300,146L303,141L300,144L297,145Z"/><path class="w3" d="M303,141L306,140L303,143L300,144Z"/><path class="w3" d="M306,140L309,140L306,142L303,143Z"/><path class="w3" d="M309,140L312,145L308,140L306,142Z"/><path class="w3" d="M312,145L315,139L311,143L308,140Z"/><path class="w3" d="M315,139L318,142L314,141L311,143Z"/><path class="w3" d="M318,142L321,139L317,139L314,141Z"/><path class="w3" d="M321,139L324,138L319,140L317,139Z"/><path class="w3" d="M324,138L327,139L322,138L319,140Z"/><path class="w3" d="M327,139L330,144L325,140L322,138Z"/><path class="w3" d="M330,144L333,141L328,141L325,140Z"/><path class="w3" d="M333,141L336,137L330,138L328,141Z"/><path class="w3" d="M336,137L339,142L333,138L330,138Z"/><path class="w3" d="M339,142L342,138L336,139L333,138Z"/><path class="w3" d="M342,138L345,134L339,135L336,139Z"/><path class="w3" d="M345,134L348,138L341,142L339,135Z"/><path class="w3" d="M348,138L351,142L344,135L341,142Z"/><path class="w3" d="M351,142L354,135L347,136L344,135Z"/><path class="w3" d="M354,135L358,138L350,136L347,136Z"/><path class="w3" d="M358,138L361,133L353,138L350,136Z"/><path class="w3" d="M361,133L364,139L355,135L353,138Z"/><path class="w3" d="M364,139L367,132L358,143L355,135Z"/><path class="w3" d="M367,132L370,132L361,134L358,143Z"/><path class="w3" d="M370,132L373,141L364,133L361,134Z"/><path class="w3" d="M373,141L376,135L366,139L364,133Z"/><path class="w3" d="M376,135L379,137L369,135L366,139Z"/><path class="w3" d="M379,137L382,142L372,135L369,135Z"/><path class="w3" d="M382,142L385,131L375,138L372,135Z"/><path class="w3" d="M385,131L388,139L377,133L375,138Z"/><path class="w3" d="M388,139L391,136L380,139L377,133Z"/><path class="w3" d="M391,136L394,144L383,143L380,139Z"/><path class="w3" d="M394,144L397,130L386,137L383,143Z"/><path class="w3" d="M397,130L400,129L388,133L386,137Z"/><path class="w3" d="M400,129L403,133L391,143L388,133Z"/><path class="w3" d="M403,133L406,142L394,138L391,143Z"/><path class="w3" d="M406,142L409,134L397,133L394,138Z"/><path class="w3" d="M409,134L412,136L399,143L397,133Z"/><path class="w3" d="M412,136L415,137L402,132L399,143Z"/><path class="w3" d="M415,137L418,141L405,139L402,132Z"/><path class="w3" d="M418,141L421,141L408,139L405,139Z"/><path class="w3" d="M421,141L424,131L410,134L408,139Z"/><path class="w3" d="M424,131L427,134L413,136L410,134Z"/><path class="w3" d="M427,134L430,132L416,140L413,136Z"/><path class="w3" d="M430,132L433,132L419,142L416,140Z"/><path class="w3" d="M433,132L436,137L421,138L419,142Z"/><path class="w3" d="M436,137L439,135L424,131L421,138Z"/><path class="w3" d="M439,135L442,138L427,130L424,131Z"/><path class="w3" d="M442,138L445,133L430,133L427,130Z"/><path class="w3" d="M445,133L449,136L432,133L430,133Z"/><path class="w3" d="M449,136L452,131L435,133L432,133Z"/><path class="w3" d="M452,131L455,140L438,131L435,133Z"/><path class="w3" d="M455,140L458,140L441,142L438,131Z"/><path class="w3" d="M458,140L461,144L443,143L441,142Z"/><path class="w3" d="M461,144L464,145L446,133L443,143Z"/><path class="w3" d="M464,145L467,141L449,145L446,133Z"/><path class="w3" d="M467,141L470,144L452,138L449,145Z"/><path class="w3" d="M470,144L473,138L455,139L452,138Z"/><path class="w3" d="M473,138L476,138L457,131L455,139Z"/><path class="w3" d="M476,138L479,131L460,136L457,131Z"/><path class="w3" d="M479,131L482,144L463,141L460,136Z"/><path class="w3" d="M482,144L485,130L466,144L463,141Z"/><path class="w3" d="M485,130L488,142L468,137L466,144Z"/><path class="w3" d="M488,142L491,131L471,136L468,137Z"/><path class="w3" d="M491,131L494,139L474,138L471,136Z"/><path class="w3" d="M494,139L497,142L477,137L474,138Z"/><path class="w3" d="M497,142L500,136L479,144L477,137Z"/><path class="w3" d="M500,136L503,140L482,141L479,144Z"/><path class="w3" d="M503,140L506,146L485,133L482,141Z"/><path class="w3" d="M261,151L258,150L259,149L262,151Z"/><path class="w3" d="M258,150L255,147L256,148L259,149Z"/><path class="w3" d="M255,147L251,147L253,146L256,148Z"/><path class="w3" d="M251,147L248,145L250,148L253,146Z"/><path class="w3" d="M248,145L245,148L247,148L250,148Z"/><path class="w3" d="M245,148L241,145L244,147L247,148Z"/><path class="w3" d="M241,145L238,141L241,142L244,147Z"/><path class="w3" d="M238,141L235,140L238,144L241,142Z"/><path class="w3" d="M235,140L231,139L235,143L238,144Z"/><path class="w3" d="M231,139L228,141L232,140L235,143Z"/><path class="w3" d="M228,141L225,141L229,140L232,140Z"/><path class="w3" d="M225,141L221,139L226,141L229,140Z"/><path class="w3" d="M221,139L218,138L223,140L226,141Z"/><path class="w3" d="M218,138L215,144L220,141L223,140Z"/><path class="w3" d="M215,144L211,138L217,138L220,141Z"/><path class="w3" d="M211,138L208,135L214,140L217,138Z"/><path class="w3" d="M208,135L205,142L211,140L214,140Z"/><path class="w3" d="M205,142L201,138L208,141L211,140Z"/><path class="w3" d="M201,138L198,131L205,139L208,141Z"/><path class="w3" d="M198,131L195,130L202,140L205,139Z"/><path class="w3" d="M195,130L191,140L199,146L202,140Z"/><path class="w3" d="M191,140L188,142L196,141L199,146Z"/><path class="w3" d="M188,142L185,144L193,136L196,141Z"/><path class="w3" d="M185,144L181,143L190,141L193,136Z"/><path class="w3" d="M181,143L178,130L186,143L190,141Z"/><path class="w3" d="M178,130L175,129L183,131L186,143Z"/><path class="w3" d="M175,129L171,138L180,135L183,131Z"/><path class="w3" d="M171,138L168,134L177,135L180,135Z"/><path class="w3" d="M168,134L165,133L174,139L177,135Z"/><path class="w3" d="M165,133L161,143L171,129L174,139Z"/><path class="w3" d="M161,143L158,133L168,131L171,129Z"/><path class="w3" d="M158,133L155,132L165,133L168,131Z"/><path class="w3" d="M155,132L151,138L162,134L165,133Z"/><path class="w3" d="M151,138L148,131L159,135L162,134Z"/><path class="w3" d="M148,131L145,131L156,136L159,135Z"/><path class="w3" d="M145,131L141,137L153,138L156,136Z"/><path class="w3" d="M141,137L138,128L150,138L153,138Z"/><path class="w3" d="M138,128L135,139L147,136L150,138Z"/><path class="w3" d="M135,139L131,136L144,137L147,136Z"/><path class="w3" d="M131,136L128,138L141,137L144,137Z"/><path class="w3" d="M128,138L125,135L138,136L141,137Z"/><path class="w3" d="M125,135L121,127L135,131L138,136Z"/><path class="w3" d="M121,127L118,131L132,128L135,131Z"/><path class="w3" d="M118,131L115,132L129,139L132,128Z"/><path class="w3" d="M115,132L111,126L126,144L129,139Z"/><path class="w3" d="M111,126L108,140L123,140L126,144Z"/><path class="w3" d="M108,140L105,140L120,144L123,140Z"/><path class="w3" d="M105,140L101,132L117,131L120,144Z"/><path class="w3" d="M101,132L98,140L114,133L117,131Z"/><path class="w3" d="M98,140L95,127L111,139L114,133Z"/><path class="w3" d="M95,127L91,137L108,140L111,139Z"/><path class="w3" d="M91,137L88,135L105,129L108,140Z"/><path class="w3" d="M88,135L85,133L102,129L105,129Z"/><path class="w3" d="M85,133L81,127L99,131L102,129Z"/><path class="w3" d="M81,127L78,124L95,131L99,131Z"/><path class="w3" d="M78,124L75,131L92,130L95,131Z"/><path class="w3" d="M75,131L71,140L89,137L92,130Z"/><path class="w3" d="M71,140L68,137L86,138L89,137Z"/><path class="w3" d="M68,137L65,130L83,134L86,138Z"/><path class="w3" d="M65,130L61,138L80,128L83,134Z"/><path class="w3" d="M61,138L58,125L77,125L80,128Z"/><path class="w3" d="M58,125L54,125L74,127L77,125Z"/><path class="w3" d="M54,125L51,139L71,129L74,127Z"/><path class="w3" d="M51,139L48,139L68,144L71,129Z"/><path class="w3" d="M48,139L44,140L65,141L68,144Z"/><path class="w3" d="M44,140L41,130L62,130L65,141Z"/><path class="w3" d="M41,130L38,141L59,135L62,130Z"/><path class="w3" d="M38,141L34,132L56,137L59,135Z"/><path class="w3" d="M34,132L31,142L53,138L56,137Z"/><path class="w3" d="M31,142L28,128L50,128L53,138Z"/><path class="w3" d="M28,128L24,132L47,133L50,128Z"/><path class="w3" d="M24,132L21,134L44,127L47,133Z"/><path class="w3" d="M21,134L18,142L41,143L44,127Z"/><path class="w3" d="M18,142L14,145L38,128L41,143Z"/><path class="w3" d="M283,151L286,149L285,150L282,151Z"/><path class="w3" d="M286,149L289,149L288,148L285,150Z"/><path class="w3" d="M289,149L293,146L291,147L288,148Z"/><path class="w3" d="M293,146L296,146L294,148L291,147Z"/><path class="w3" d="M296,146L299,145L297,146L294,148Z"/><path class="w3" d="M299,145L303,144L300,146L297,146Z"/><path class="w3" d="M303,144L306,140L303,141L300,146Z"/><path class="w3" d="M306,140L309,140L306,140L303,141Z"/><path class="w3" d="M309,140L313,140L309,140L306,140Z"/><path class="w3" d="M313,140L316,141L312,145L309,140Z"/><path class="w3" d="M316,141L319,140L315,139L312,145Z"/><path class="w3" d="M319,140L323,141L318,142L315,139Z"/><path class="w3" d="M323,141L326,139L321,139L318,142Z"/><path class="w3" d="M326,139L329,141L324,138L321,139Z"/><path class="w3" d="M329,141L333,144L327,139L324,138Z"/><path class="w3" d="M333,144L336,141L330,144L327,139Z"/><path class="w3" d="M336,141L339,144L333,141L330,144Z"/><path class="w3" d="M339,144L343,136L336,137L333,141Z"/><path class="w3" d="M343,136L346,142L339,142L336,137Z"/><path class="w3" d="M346,142L349,133L342,138L339,142Z"/><path class="w3" d="M349,133L353,140L345,134L342,138Z"/><path class="w3" d="M353,140L356,141L348,138L345,134Z"/><path class="w3" d="M356,141L359,136L351,142L348,138Z"/><path class="w3" d="M359,136L363,139L354,135L351,142Z"/><path class="w3" d="M363,139L366,132L358,138L354,135Z"/><path class="w3" d="M366,132L369,138L361,133L358,138Z"/><path class="w3" d="M369,138L373,130L364,139L361,133Z"/><path class="w3" d="M373,130L376,143L367,132L364,139Z"/><path class="w3" d="M376,143L379,144L370,132L367,132Z"/><path class="w3" d="M379,144L383,130L373,141L370,132Z"/><path class="w3" d="M383,130L386,132L376,135L373,141Z"/><path class="w3" d="M386,132L389,140L379,137L376,135Z"/><path class="w3" d="M389,140L393,133L382,142L379,137Z"/><path class="w3" d="M393,133L396,138L385,131L382,142Z"/><path class="w3" d="M396,138L399,134L388,139L385,131Z"/><path class="w3" d="M399,134L403,140L391,136L388,139Z"/><path class="w3" d="M403,140L406,135L394,144L391,136Z"/><path class="w3" d="M406,135L409,132L397,130L394,144Z"/><path class="w3" d="M409,132L413,129L400,129L397,130Z"/><path class="w3" d="M413,129L416,139L403,133L400,129Z"/><path class="w3" d="M416,139L419,135L406,142L403,133Z"/><path class="w3" d="M419,135L423,135L409,134L406,142Z"/><path class="w3" d="M423,135L426,130L412,136L409,134Z"/><path class="w3" d="M426,130L429,136L415,137L412,136Z"/><path class="w3" d="M429,136L433,129L418,141L415,137Z"/><path class="w3" d="M433,129L436,128L421,141L418,141Z"/><path class="w3" d="M436,128L439,137L424,131L421,141Z"/><path class="w3" d="M439,137L443,136L427,134L424,131Z"/><path class="w3" d="M443,136L446,126L430,132L427,134Z"/><path class="w3" d="M446,126L449,134L433,132L430,132Z"/><path class="w3" d="M449,134L453,135L436,137L433,132Z"/><path class="w3" d="M453,135L456,131L439,135L436,137Z"/><path class="w3" d="M456,131L459,133L442,138L439,135Z"/><path class="w3" d="M459,133L463,134L445,133L442,138Z"/><path class="w3" d="M463,134L466,133L449,136L445,133Z"/><path class="w3" d="M466,133L469,140L452,131L449,136Z"/><path class="w3" d="M469,140L473,138L455,140L452,131Z"/><path class="w3" d="M473,138L476,144L458,140L455,140Z"/><path class="w3" d="M476,144L479,132L461,144L458,140Z"/><path class="w3" d="M479,132L483,130L464,145L461,144Z"/><path class="w3" d="M483,130L486,131L467,141L464,145Z"/><path class="w3" d="M486,131L490,127L470,144L467,141Z"/><path class="w3" d="M490,127L493,131L473,138L470,144Z"/><path class="w3" d="M493,131L496,142L476,138L473,138Z"/><path class="w3" d="M496,142L500,139L479,131L476,138Z"/><path class="w3" d="M500,139L503,128L482,144L479,131Z"/><path class="w3" d="M503,128L506,142L485,130L482,144Z"/><path class="w3" d="M506,142L510,128L488,142L485,130Z"/><path class="w3" d="M510,128L513,131L491,131L488,142Z"/><path class="w3" d="M513,131L516,143L494,139L491,131Z"/><path class="w3" d="M516,143L520,141L497,142L494,139Z"/><path class="w3" d="M520,141L523,132L500,136L497,142Z"/><path class="w3" d="M523,132L526,133L503,140L500,136Z"/><path class="w3" d="M526,133L530,146L506,146L503,140Z"/><path class="w3" d="M260,152L257,150L258,150L261,151Z"/><path class="w3" d="M257,150L253,148L255,147L258,150Z"/><path class="w3" d="M253,148L249,147L251,147L255,147Z"/><path class="w3" d="M249,147L246,146L248,145L251,147Z"/><path class="w3" d="M246,146L242,143L245,148L248,145Z"/><path class="w3" d="M242,143L238,143L241,145L245,148Z"/><path class="w3" d="M238,143L235,141L238,141L241,145Z"/><path class="w3" d="M235,141L231,138L235,140L238,141Z"/><path class="w3" d="M231,138L227,139L231,139L235,140Z"/><path class="w3" d="M227,139L224,139L228,141L231,139Z"/><path class="w3" d="M224,139L220,136L225,141L228,141Z"/><path class="w3" d="M220,136L216,134L221,139L225,141Z"/><path class="w3" d="M216,134L213,134L218,138L221,139Z"/><path class="w3" d="M213,134L209,137L215,144L218,138Z"/><path class="w3" d="M209,137L205,134L211,138L215,144Z"/><path class="w3" d="M205,134L202,133L208,135L211,138Z"/><path class="w3" d="M202,133L198,139L205,142L208,135Z"/><path class="w3" d="M198,139L194,131L201,138L205,142Z"/><path class="w3" d="M194,131L191,128L198,131L201,138Z"/><path class="w3" d="M191,128L187,130L195,130L198,131Z"/><path class="w3" d="M187,130L183,130L191,140L195,130Z"/><path class="w3" d="M183,130L180,135L188,142L191,140Z"/><path class="w3" d="M180,135L176,132L185,144L188,142Z"/><path class="w3" d="M176,132L172,138L181,143L185,144Z"/><path class="w3" d="M172,138L169,129L178,130L181,143Z"/><path class="w3" d="M169,129L165,132L175,129L178,130Z"/><path class="w3" d="M165,132L161,133L171,138L175,129Z"/><path class="w3" d="M161,133L158,137L168,134L171,138Z"/><path class="w3" d="M158,137L154,133L165,133L168,134Z"/><path class="w3" d="M154,133L150,142L161,143L165,133Z"/><path class="w3" d="M150,142L146,135L158,133L161,143Z"/><path class="w3" d="M146,135L143,129L155,132L158,133Z"/><path class="w3" d="M143,129L139,139L151,138L155,132Z"/><path class="w3" d="M139,139L135,132L148,131L151,138Z"/><path class="w3" d="M135,132L132,139L145,131L148,131Z"/><path class="w3" d="M132,139L128,135L141,137L145,131Z"/><path class="w3" d="M128,135L124,124L138,128L141,137Z"/><path class="w3" d="M124,124L121,139L135,139L138,128Z"/><path class="w3" d="M121,139L117,126L131,136L135,139Z"/><path class="w3" d="M117,126L113,142L128,138L131,136Z"/><path class="w3" d="M113,142L110,131L125,135L128,138Z"/><path class="w3" d="M110,131L106,125L121,127L125,135Z"/><path class="w3" d="M106,125L102,125L118,131L121,127Z"/><path class="w3" d="M102,125L99,134L115,132L118,131Z"/><path class="w3" d="M99,134L95,131L111,126L115,132Z"/><path class="w3" d="M95,131L91,129L108,140L111,126Z"/><path class="w3" d="M91,129L88,129L105,140L108,140Z"/><path class="w3" d="M88,129L84,130L101,132L105,140Z"/><path class="w3" d="M84,130L80,133L98,140L101,132Z"/><path class="w3" d="M80,133L77,140L95,127L98,140Z"/><path class="w3" d="M77,140L73,131L91,137L95,127Z"/><path class="w3" d="M73,131L69,133L88,135L91,137Z"/><path class="w3" d="M69,133L66,132L85,133L88,135Z"/><path class="w3" d="M66,132L62,123L81,127L85,133Z"/><path class="w3" d="M62,123L58,138L78,124L81,127Z"/><path class="w3" d="M58,138L55,127L75,131L78,124Z"/><path class="w3" d="M55,127L51,136L71,140L75,131Z"/><path class="w3" d="M51,136L47,129L68,137L71,140Z"/><path class="w3" d="M47,129L44,125L65,130L68,137Z"/><path class="w3" d="M44,125L40,137L61,138L65,130Z"/><path class="w3" d="M40,137L36,132L58,125L61,138Z"/><path class="w3" d="M36,132L33,133L54,125L58,125Z"/><path class="w3" d="M33,133L29,134L51,139L54,125Z"/><path class="w3" d="M29,134L25,141L48,139L51,139Z"/><path class="w3" d="M25,141L22,131L44,140L48,139Z"/><path class="w3" d="M22,131L18,126L41,130L44,140Z"/><path class="w3" d="M18,126L14,129L38,141L41,130Z"/><path class="w3" d="M14,129L11,138L34,132L38,141Z"/><path class="w3" d="M11,138L7,127L31,142L34,132Z"/><path class="w3" d="M7,127L3,135L28,128L31,142Z"/><path class="w3" d="M3,135L-0,139L24,132L28,128Z"/><path class="w3" d="M-0,139L-4,132L21,134L24,132Z"/><path class="w3" d="M-4,132L-8,136L18,142L21,134Z"/><path class="w3" d="M-8,136L-11,135L14,145L18,142Z"/><path class="w3" d="M284,152L287,150L286,149L283,151Z"/><path class="w3" d="M287,150L291,149L289,149L286,149Z"/><path class="w3" d="M291,149L295,148L293,146L289,149Z"/><path class="w3" d="M295,148L298,147L296,146L293,146Z"/><path class="w3" d="M298,147L302,145L299,145L296,146Z"/><path class="w3" d="M302,145L306,143L303,144L299,145Z"/><path class="w3" d="M306,143L309,141L306,140L303,144Z"/><path class="w3" d="M309,141L313,139L309,140L306,140Z"/><path class="w3" d="M313,139L317,137L313,140L309,140Z"/><path class="w3" d="M317,137L320,141L316,141L313,140Z"/><path class="w3" d="M320,141L324,141L319,140L316,141Z"/><path class="w3" d="M324,141L328,138L323,141L319,140Z"/><path class="w3" d="M328,138L331,146L326,139L323,141Z"/><path class="w3" d="M331,146L335,137L329,141L326,139Z"/><path class="w3" d="M335,137L339,145L333,144L329,141Z"/><path class="w3" d="M339,145L342,136L336,141L333,144Z"/><path class="w3" d="M342,136L346,136L339,144L336,141Z"/><path class="w3" d="M346,136L350,138L343,136L339,144Z"/><path class="w3" d="M350,138L353,131L346,142L343,136Z"/><path class="w3" d="M353,131L357,139L349,133L346,142Z"/><path class="w3" d="M357,139L361,145L353,140L349,133Z"/><path class="w3" d="M361,145L364,144L356,141L353,140Z"/><path class="w3" d="M364,144L368,140L359,136L356,141Z"/><path class="w3" d="M368,140L372,131L363,139L359,136Z"/><path class="w3" d="M372,131L375,131L366,132L363,139Z"/><path class="w3" d="M375,131L379,136L369,138L366,132Z"/><path class="w3" d="M379,136L383,130L373,130L369,138Z"/><path class="w3" d="M383,130L386,142L376,143L373,130Z"/><path class="w3" d="M386,142L390,141L379,144L376,143Z"/><path class="w3" d="M390,141L394,134L383,130L379,144Z"/><path class="w3" d="M394,134L398,133L386,132L383,130Z"/><path class="w3" d="M398,133L401,130L389,140L386,132Z"/><path class="w3" d="M401,130L405,138L393,133L389,140Z"/><path class="w3" d="M405,138L409,129L396,138L393,133Z"/><path class="w3" d="M409,129L412,131L399,134L396,138Z"/><path class="w3" d="M412,131L416,131L403,140L399,134Z"/><path class="w3" d="M416,131L420,134L406,135L403,140Z"/><path class="w3" d="M420,134L423,140L409,132L406,135Z"/><path class="w3" d="M423,140L427,134L413,129L409,132Z"/><path class="w3" d="M427,134L431,127L416,139L413,129Z"/><path class="w3" d="M431,127L434,144L419,135L416,139Z"/><path class="w3" d="M434,144L438,137L423,135L419,135Z"/><path class="w3" d="M438,137L442,137L426,130L423,135Z"/><path class="w3" d="M442,137L445,138L429,136L426,130Z"/><path class="w3" d="M445,138L449,128L433,129L429,136Z"/><path class="w3" d="M449,128L453,131L436,128L433,129Z"/><path class="w3" d="M453,131L456,141L439,137L436,128Z"/><path class="w3" d="M456,141L460,129L443,136L439,137Z"/><path class="w3" d="M460,129L464,126L446,126L443,136Z"/><path class="w3" d="M464,126L467,141L449,134L446,126Z"/><path class="w3" d="M467,141L471,144L453,135L449,134Z"/><path class="w3" d="M471,144L475,132L456,131L453,135Z"/><path class="w3" d="M475,132L478,127L459,133L456,131Z"/><path class="w3" d="M478,127L482,132L463,134L459,133Z"/><path class="w3" d="M482,132L486,134L466,133L463,134Z"/><path class="w3" d="M486,134L489,136L469,140L466,133Z"/><path class="w3" d="M489,136L493,133L473,138L469,140Z"/><path class="w3" d="M493,133L497,126L476,144L473,138Z"/><path class="w3" d="M497,126L500,131L479,132L476,144Z"/><path class="w3" d="M500,131L504,128L483,130L479,132Z"/><path class="w3" d="M504,128L508,133L486,131L483,130Z"/><path class="w3" d="M508,133L511,125L490,127L486,131Z"/><path class="w3" d="M511,125L515,128L493,131L490,127Z"/><path class="w3" d="M515,128L519,133L496,142L493,131Z"/><path class="w3" d="M519,133L522,138L500,139L496,142Z"/><path class="w3" d="M522,138L526,138L503,128L500,139Z"/><path class="w3" d="M526,138L530,125L506,142L503,128Z"/><path class="w3" d="M530,125L533,132L510,128L506,142Z"/><path class="w3" d="M533,132L537,143L513,131L510,128Z"/><path class="w3" d="M537,143L541,136L516,143L513,131Z"/><path class="w3" d="M541,136L544,137L520,141L516,143Z"/><path class="w3" d="M544,137L548,133L523,132L520,141Z"/><path class="w3" d="M548,133L552,138L526,133L523,132Z"/><path class="w3" d="M552,138L555,126L530,146L526,133Z"/><path class="w3" d="M259,152L255,149L257,150L260,152Z"/><path class="w3" d="M255,149L251,149L253,148L257,150Z"/><path class="w3" d="M251,149L247,146L249,147L253,148Z"/><path class="w3" d="M247,146L243,143L246,146L249,147Z"/><path class="w3" d="M243,143L239,142L242,143L246,146Z"/><path class="w3" d="M239,142L235,141L238,143L242,143Z"/><path class="w3" d="M235,141L231,140L235,141L238,143Z"/><path class="w3" d="M231,140L227,137L231,138L235,141Z"/><path class="w3" d="M227,137L223,136L227,139L231,138Z"/><path class="w3" d="M223,136L219,139L224,139L227,139Z"/><path class="w3" d="M219,139L215,135L220,136L224,139Z"/><path class="w3" d="M215,135L211,132L216,134L220,136Z"/><path class="w3" d="M211,132L207,134L213,134L216,134Z"/><path class="w3" d="M207,134L203,137L209,137L213,134Z"/><path class="w3" d="M203,137L199,131L205,134L209,137Z"/><path class="w3" d="M199,131L194,142L202,133L205,134Z"/><path class="w3" d="M194,142L190,141L198,139L202,133Z"/><path class="w3" d="M190,141L186,132L194,131L198,139Z"/><path class="w3" d="M186,132L182,135L191,128L194,131Z"/><path class="w3" d="M182,135L178,127L187,130L191,128Z"/><path class="w3" d="M178,127L174,126L183,130L187,130Z"/><path class="w3" d="M174,126L170,134L180,135L183,130Z"/><path class="w3" d="M170,134L166,129L176,132L180,135Z"/><path class="w3" d="M166,129L162,132L172,138L176,132Z"/><path class="w3" d="M162,132L158,133L169,129L172,138Z"/><path class="w3" d="M158,133L154,133L165,132L169,129Z"/><path class="w3" d="M154,133L150,134L161,133L165,132Z"/><path class="w3" d="M150,134L146,141L158,137L161,133Z"/><path class="w3" d="M146,141L142,135L154,133L158,137Z"/><path class="w3" d="M142,135L138,124L150,142L154,133Z"/><path class="w3" d="M138,124L134,125L146,135L150,142Z"/><path class="w3" d="M134,125L130,143L143,129L146,135Z"/><path class="w3" d="M130,143L126,143L139,139L143,129Z"/><path class="w3" d="M126,143L122,138L135,132L139,139Z"/><path class="w3" d="M122,138L118,128L132,139L135,132Z"/><path class="w3" d="M118,128L114,133L128,135L132,139Z"/><path class="w3" d="M114,133L110,141L124,124L128,135Z"/><path class="w3" d="M110,141L106,134L121,139L124,124Z"/><path class="w3" d="M106,134L102,132L117,126L121,139Z"/><path class="w3" d="M102,132L98,127L113,142L117,126Z"/><path class="w3" d="M98,127L94,134L110,131L113,142Z"/><path class="w3" d="M94,134L90,126L106,125L110,131Z"/><path class="w3" d="M90,126L86,126L102,125L106,125Z"/><path class="w3" d="M86,126L81,128L99,134L102,125Z"/><path class="w3" d="M81,128L77,141L95,131L99,134Z"/><path class="w3" d="M77,141L73,127L91,129L95,131Z"/><path class="w3" d="M73,127L69,139L88,129L91,129Z"/><path class="w3" d="M69,139L65,142L84,130L88,129Z"/><path class="w3" d="M65,142L61,132L80,133L84,130Z"/><path class="w3" d="M61,132L57,143L77,140L80,133Z"/><path class="w3" d="M57,143L53,142L73,131L77,140Z"/><path class="w3" d="M53,142L49,135L69,133L73,131Z"/><path class="w3" d="M49,135L45,133L66,132L69,133Z"/><path class="w3" d="M45,133L41,141L62,123L66,132Z"/><path class="w3" d="M41,141L37,124L58,138L62,123Z"/><path class="w3" d="M37,124L33,124L55,127L58,138Z"/><path class="w3" d="M33,124L29,131L51,136L55,127Z"/><path class="w3" d="M29,131L25,129L47,129L51,136Z"/><path class="w3" d="M25,129L21,134L44,125L47,129Z"/><path class="w3" d="M21,134L17,122L40,137L44,125Z"/><path class="w3" d="M17,122L13,141L36,132L40,137Z"/><path class="w3" d="M13,141L9,138L33,133L36,132Z"/><path class="w3" d="M9,138L5,140L29,134L33,133Z"/><path class="w3" d="M5,140L1,125L25,141L29,134Z"/><path class="w3" d="M1,125L-3,133L22,131L25,141Z"/><path class="w3" d="M-3,133L-7,135L18,126L22,131Z"/><path class="w3" d="M-7,135L-11,135L14,129L18,126Z"/><path class="w3" d="M-11,135L-15,124L11,138L14,129Z"/><path class="w3" d="M-15,124L-19,136L7,127L11,138Z"/><path class="w3" d="M-19,136L-23,125L3,135L7,127Z"/><path class="w3" d="M-23,125L-28,127L-0,139L3,135Z"/><path class="w3" d="M-28,127L-32,134L-4,132L-0,139Z"/><path class="w3" d="M285,152L289,151L287,150L284,152Z"/><path class="w3" d="M289,151L293,148L291,149L287,150Z"/><path class="w3" d="M293,148L297,149L295,148L291,149Z"/><path class="w3" d="M297,149L301,145L298,147L295,148Z"/><path class="w3" d="M301,145L305,144L302,145L298,147Z"/><path class="w3" d="M305,144L309,140L306,143L302,145Z"/><path class="w3" d="M309,140L313,140L309,141L306,143Z"/><path class="w3" d="M313,140L317,137L313,139L309,141Z"/><path class="w3" d="M317,137L321,143L317,137L313,139Z"/><path class="w3" d="M321,143L325,140L320,141L317,137Z"/><path class="w3" d="M325,140L329,134L324,141L320,141Z"/><path class="w3" d="M329,134L333,138L328,138L324,141Z"/><path class="w3" d="M333,138L337,144L331,146L328,138Z"/><path class="w3" d="M337,144L341,141L335,137L331,146Z"/><path class="w3" d="M341,141L345,137L339,145L335,137Z"/><path class="w3" d="M345,137L350,135L342,136L339,145Z"/><path class="w3" d="M350,135L354,137L346,136L342,136Z"/><path class="w3" d="M354,137L358,138L350,138L346,136Z"/><path class="w3" d="M358,138L362,135L353,131L350,138Z"/><path class="w3" d="M362,135L366,136L357,139L353,131Z"/><path class="w3" d="M366,136L370,143L361,145L357,139Z"/><path class="w3" d="M370,143L374,136L364,144L361,145Z"/><path class="w3" d="M374,136L378,133L368,140L364,144Z"/><path class="w3" d="M378,133L382,132L372,131L368,140Z"/><path class="w3" d="M382,132L386,129L375,131L372,131Z"/><path class="w3" d="M386,129L390,133L379,136L375,131Z"/><path class="w3" d="M390,133L394,138L383,130L379,136Z"/><path class="w3" d="M394,138L398,128L386,142L383,130Z"/><path class="w3" d="M398,128L402,142L390,141L386,142Z"/><path class="w3" d="M402,142L406,138L394,134L390,141Z"/><path class="w3" d="M406,138L410,135L398,133L394,134Z"/><path class="w3" d="M410,135L414,136L401,130L398,133Z"/><path class="w3" d="M414,136L418,138L405,138L401,130Z"/><path class="w3" d="M418,138L422,127L409,129L405,138Z"/><path class="w3" d="M422,127L426,134L412,131L409,129Z"/><path class="w3" d="M426,134L430,131L416,131L412,131Z"/><path class="w3" d="M430,131L434,131L420,134L416,131Z"/><path class="w3" d="M434,131L438,142L423,140L420,134Z"/><path class="w3" d="M438,142L442,136L427,134L423,140Z"/><path class="w3" d="M442,136L446,142L431,127L427,134Z"/><path class="w3" d="M446,142L450,134L434,144L431,127Z"/><path class="w3" d="M450,134L454,130L438,137L434,144Z"/><path class="w3" d="M454,130L458,126L442,137L438,137Z"/><path class="w3" d="M458,126L463,124L445,138L442,137Z"/><path class="w3" d="M463,124L467,141L449,128L445,138Z"/><path class="w3" d="M467,141L471,134L453,131L449,128Z"/><path class="w3" d="M471,134L475,130L456,141L453,131Z"/><path class="w3" d="M475,130L479,134L460,129L456,141Z"/><path class="w3" d="M479,134L483,123L464,126L460,129Z"/><path class="w3" d="M483,123L487,132L467,141L464,126Z"/><path class="w3" d="M487,132L491,126L471,144L467,141Z"/><path class="w3" d="M491,126L495,142L475,132L471,144Z"/><path class="w3" d="M495,142L499,135L478,127L475,132Z"/><path class="w3" d="M499,135L503,128L482,132L478,127Z"/><path class="w3" d="M503,128L507,127L486,134L482,132Z"/><path class="w3" d="M507,127L511,134L489,136L486,134Z"/><path class="w3" d="M511,134L515,125L493,133L489,136Z"/><path class="w3" d="M515,125L519,127L497,126L493,133Z"/><path class="w3" d="M519,127L523,133L500,131L497,126Z"/><path class="w3" d="M523,133L527,128L504,128L500,131Z"/><path class="w3" d="M527,128L531,132L508,133L504,128Z"/><path class="w3" d="M531,132L535,141L511,125L508,133Z"/><path class="w3" d="M535,141L539,123L515,128L511,125Z"/><path class="w3" d="M539,123L543,124L519,133L515,128Z"/><path class="w3" d="M543,124L547,125L522,138L519,133Z"/><path class="w3" d="M547,125L551,139L526,138L522,138Z"/><path class="w3" d="M551,139L555,128L530,125L526,138Z"/><path class="w3" d="M555,128L559,143L533,132L530,125Z"/><path class="w3" d="M258,152L253,149L255,149L259,152Z"/><path class="w3" d="M253,149L249,147L251,149L255,149Z"/><path class="w3" d="M249,147L244,144L247,146L251,149Z"/><path class="w3" d="M244,144L240,142L243,143L247,146Z"/><path class="w3" d="M240,142L236,141L239,142L243,143Z"/><path class="w3" d="M236,141L231,144L235,141L239,142Z"/><path class="w3" d="M231,144L227,138L231,140L235,141Z"/><path class="w3" d="M227,138L222,140L227,137L231,140Z"/><path class="w3" d="M222,140L218,134L223,136L227,137Z"/><path class="w3" d="M218,134L213,133L219,139L223,136Z"/><path class="w3" d="M213,133L209,137L215,135L219,139Z"/><path class="w3" d="M209,137L205,138L211,132L215,135Z"/><path class="w3" d="M205,138L200,131L207,134L211,132Z"/><path class="w3" d="M200,131L196,129L203,137L207,134Z"/><path class="w3" d="M196,129L191,127L199,131L203,137Z"/><path class="w3" d="M191,127L187,130L194,142L199,131Z"/><path class="w3" d="M187,130L182,141L190,141L194,142Z"/><path class="w3" d="M182,141L178,128L186,132L190,141Z"/><path class="w3" d="M178,128L173,142L182,135L186,132Z"/><path class="w3" d="M173,142L169,126L178,127L182,135Z"/><path class="w3" d="M169,126L165,129L174,126L178,127Z"/><path class="w3" d="M165,129L160,133L170,134L174,126Z"/><path class="w3" d="M160,133L156,130L166,129L170,134Z"/><path class="w3" d="M156,130L151,130L162,132L166,129Z"/><path class="w3" d="M151,130L147,125L158,133L162,132Z"/><path class="w3" d="M147,125L142,128L154,133L158,133Z"/><path class="w3" d="M142,128L138,133L150,134L154,133Z"/><path class="w3" d="M138,133L133,136L146,141L150,134Z"/><path class="w3" d="M133,136L129,136L142,135L146,141Z"/><path class="w3" d="M129,136L125,142L138,124L142,135Z"/><path class="w3" d="M125,142L120,139L134,125L138,124Z"/><path class="w3" d="M120,139L116,126L130,143L134,125Z"/><path class="w3" d="M116,126L111,140L126,143L130,143Z"/><path class="w3" d="M111,140L107,128L122,138L126,143Z"/><path class="w3" d="M107,128L102,123L118,128L122,138Z"/><path class="w3" d="M102,123L98,125L114,133L118,128Z"/><path class="w3" d="M98,125L94,131L110,141L114,133Z"/><path class="w3" d="M94,131L89,136L106,134L110,141Z"/><path class="w3" d="M89,136L85,138L102,132L106,134Z"/><path class="w3" d="M85,138L80,139L98,127L102,132Z"/><path class="w3" d="M80,139L76,127L94,134L98,127Z"/><path class="w3" d="M76,127L71,124L90,126L94,134Z"/><path class="w3" d="M71,124L67,119L86,126L90,126Z"/><path class="w3" d="M67,119L62,133L81,128L86,126Z"/><path class="w3" d="M62,133L58,120L77,141L81,128Z"/><path class="w3" d="M58,120L54,122L73,127L77,141Z"/><path class="w3" d="M54,122L49,135L69,139L73,127Z"/><path class="w3" d="M49,135L45,123L65,142L69,139Z"/><path class="w3" d="M45,123L40,127L61,132L65,142Z"/><path class="w3" d="M40,127L36,122L57,143L61,132Z"/><path class="w3" d="M36,122L31,125L53,142L57,143Z"/><path class="w3" d="M31,125L27,136L49,135L53,142Z"/><path class="w3" d="M27,136L22,137L45,133L49,135Z"/><path class="w3" d="M22,137L18,130L41,141L45,133Z"/><path class="w3" d="M18,130L14,131L37,124L41,141Z"/><path class="w3" d="M14,131L9,141L33,124L37,124Z"/><path class="w3" d="M9,141L5,123L29,131L33,124Z"/><path class="w3" d="M5,123L0,130L25,129L29,131Z"/><path class="w3" d="M0,130L-4,130L21,134L25,129Z"/><path class="w3" d="M-4,130L-9,123L17,122L21,134Z"/><path class="w3" d="M-9,123L-13,135L13,141L17,122Z"/><path class="w3" d="M-13,135L-18,138L9,138L13,141Z"/><path class="w3" d="M-18,138L-22,128L5,140L9,138Z"/><path class="w3" d="M-22,128L-26,136L1,125L5,140Z"/><path class="w3" d="M-26,136L-31,134L-3,133L1,125Z"/><path class="w3" d="M286,152L291,149L289,151L285,152Z"/><path class="w3" d="M291,149L295,149L293,148L289,151Z"/><path class="w3" d="M295,149L300,144L297,149L293,148Z"/><path class="w3" d="M300,144L304,143L301,145L297,149Z"/><path class="w3" d="M304,143L308,143L305,144L301,145Z"/><path class="w3" d="M308,143L313,139L309,140L305,144Z"/><path class="w3" d="M313,139L317,140L313,140L309,140Z"/><path class="w3" d="M317,140L322,137L317,137L313,140Z"/><path class="w3" d="M322,137L326,138L321,143L317,137Z"/><path class="w3" d="M326,138L331,136L325,140L321,143Z"/><path class="w3" d="M331,136L335,133L329,134L325,140Z"/><path class="w3" d="M335,133L339,132L333,138L329,134Z"/><path class="w3" d="M339,132L344,135L337,144L333,138Z"/><path class="w3" d="M344,135L348,136L341,141L337,144Z"/><path class="w3" d="M348,136L353,132L345,137L341,141Z"/><path class="w3" d="M353,132L357,132L350,135L345,137Z"/><path class="w3" d="M357,132L362,143L354,137L350,135Z"/><path class="w3" d="M362,143L366,134L358,138L354,137Z"/><path class="w3" d="M366,134L371,137L362,135L358,138Z"/><path class="w3" d="M371,137L375,131L366,136L362,135Z"/><path class="w3" d="M375,131L379,141L370,143L366,136Z"/><path class="w3" d="M379,141L384,138L374,136L370,143Z"/><path class="w3" d="M384,138L388,138L378,133L374,136Z"/><path class="w3" d="M388,138L393,137L382,132L378,133Z"/><path class="w3" d="M393,137L397,131L386,129L382,132Z"/><path class="w3" d="M397,131L402,128L390,133L386,129Z"/><path class="w3" d="M402,128L406,129L394,138L390,133Z"/><path class="w3" d="M406,129L411,130L398,128L394,138Z"/><path class="w3" d="M411,130L415,128L402,142L398,128Z"/><path class="w3" d="M415,128L419,134L406,138L402,142Z"/><path class="w3" d="M419,134L424,133L410,135L406,138Z"/><path class="w3" d="M424,133L428,129L414,136L410,135Z"/><path class="w3" d="M428,129L433,138L418,138L414,136Z"/><path class="w3" d="M433,138L437,127L422,127L418,138Z"/><path class="w3" d="M437,127L442,122L426,134L422,127Z"/><path class="w3" d="M442,122L446,124L430,131L426,134Z"/><path class="w3" d="M446,124L450,142L434,131L430,131Z"/><path class="w3" d="M450,142L455,124L438,142L434,131Z"/><path class="w3" d="M455,124L459,140L442,136L438,142Z"/><path class="w3" d="M459,140L464,142L446,142L442,136Z"/><path class="w3" d="M464,142L468,130L450,134L446,142Z"/><path class="w3" d="M468,130L473,134L454,130L450,134Z"/><path class="w3" d="M473,134L477,138L458,126L454,130Z"/><path class="w3" d="M477,138L482,129L463,124L458,126Z"/><path class="w3" d="M482,129L486,132L467,141L463,124Z"/><path class="w3" d="M486,132L490,132L471,134L467,141Z"/><path class="w3" d="M490,132L495,131L475,130L471,134Z"/><path class="w3" d="M495,131L499,127L479,134L475,130Z"/><path class="w3" d="M499,127L504,123L483,123L479,134Z"/><path class="w3" d="M504,123L508,124L487,132L483,123Z"/><path class="w3" d="M508,124L513,126L491,126L487,132Z"/><path class="w3" d="M513,126L517,124L495,142L491,126Z"/><path class="w3" d="M517,124L522,132L499,135L495,142Z"/><path class="w3" d="M522,132L526,129L503,128L499,135Z"/><path class="w3" d="M526,129L530,141L507,127L503,128Z"/><path class="w3" d="M530,141L535,142L511,134L507,127Z"/><path class="w3" d="M535,142L539,133L515,125L511,134Z"/><path class="w3" d="M539,133L544,128L519,127L515,125Z"/><path class="w3" d="M544,128L548,137L523,133L519,127Z"/><path class="w3" d="M548,137L553,120L527,128L523,133Z"/><path class="w3" d="M553,120L557,135L531,132L527,128Z"/><path class="w3" d="M557,135L562,131L535,141L531,132Z"/><path class="w3" d="M256,153L251,150L253,149L258,152Z"/><path class="w3" d="M251,150L247,148L249,147L253,149Z"/><path class="w3" d="M247,148L242,143L244,144L249,147Z"/><path class="w3" d="M242,143L237,145L240,142L244,144Z"/><path class="w3" d="M237,145L232,139L236,141L240,142Z"/><path class="w3" d="M232,139L227,138L231,144L236,141Z"/><path class="w3" d="M227,138L222,136L227,138L231,144Z"/><path class="w3" d="M222,136L217,139L222,140L227,138Z"/><path class="w3" d="M217,139L212,134L218,134L222,140Z"/><path class="w3" d="M212,134L208,131L213,133L218,134Z"/><path class="w3" d="M208,131L203,137L209,137L213,133Z"/><path class="w3" d="M203,137L198,139L205,138L209,137Z"/><path class="w3" d="M198,139L193,129L200,131L205,138Z"/><path class="w3" d="M193,129L188,135L196,129L200,131Z"/><path class="w3" d="M188,135L183,129L191,127L196,129Z"/><path class="w3" d="M183,129L178,139L187,130L191,127Z"/><path class="w3" d="M178,139L173,123L182,141L187,130Z"/><path class="w3" d="M173,123L168,138L178,128L182,141Z"/><path class="w3" d="M168,138L164,142L173,142L178,128Z"/><path class="w3" d="M164,142L159,133L169,126L173,142Z"/><path class="w3" d="M159,133L154,134L165,129L169,126Z"/><path class="w3" d="M154,134L149,129L160,133L165,129Z"/><path class="w3" d="M149,129L144,128L156,130L160,133Z"/><path class="w3" d="M144,128L139,121L151,130L156,130Z"/><path class="w3" d="M139,121L134,125L147,125L151,130Z"/><path class="w3" d="M134,125L129,132L142,128L147,125Z"/><path class="w3" d="M129,132L124,144L138,133L142,128Z"/><path class="w3" d="M124,144L120,134L133,136L138,133Z"/><path class="w3" d="M120,134L115,139L129,136L133,136Z"/><path class="w3" d="M115,139L110,130L125,142L129,136Z"/><path class="w3" d="M110,130L105,125L120,139L125,142Z"/><path class="w3" d="M105,125L100,130L116,126L120,139Z"/><path class="w3" d="M100,130L95,140L111,140L116,126Z"/><path class="w3" d="M95,140L90,131L107,128L111,140Z"/><path class="w3" d="M90,131L85,129L102,123L107,128Z"/><path class="w3" d="M85,129L81,124L98,125L102,123Z"/><path class="w3" d="M81,124L76,116L94,131L98,125Z"/><path class="w3" d="M76,116L71,134L89,136L94,131Z"/><path class="w3" d="M71,134L66,132L85,138L89,136Z"/><path class="w3" d="M66,132L61,140L80,139L85,138Z"/><path class="w3" d="M61,140L56,122L76,127L80,139Z"/><path class="w3" d="M56,122L51,133L71,124L76,127Z"/><path class="w3" d="M51,133L46,122L67,119L71,124Z"/><path class="w3" d="M46,122L41,123L62,133L67,119Z"/><path class="w3" d="M41,123L37,132L58,120L62,133Z"/><path class="w3" d="M37,132L32,120L54,122L58,120Z"/><path class="w3" d="M32,120L27,127L49,135L54,122Z"/><path class="w3" d="M27,127L22,131L45,123L49,135Z"/><path class="w3" d="M22,131L17,125L40,127L45,123Z"/><path class="w3" d="M17,125L12,119L36,122L40,127Z"/><path class="w3" d="M12,119L7,130L31,125L36,122Z"/><path class="w3" d="M7,130L2,131L27,136L31,125Z"/><path class="w3" d="M2,131L-2,136L22,137L27,136Z"/><path class="w3" d="M-2,136L-7,122L18,130L22,137Z"/><path class="w3" d="M-7,122L-12,132L14,131L18,130Z"/><path class="w3" d="M-12,132L-17,135L9,141L14,131Z"/><path class="w3" d="M-17,135L-22,139L5,123L9,141Z"/><path class="w3" d="M-22,139L-27,136L0,130L5,123Z"/><path class="w3" d="M-27,136L-32,120L-4,130L0,130Z"/><path class="w3" d="M288,153L293,149L291,149L286,152Z"/><path class="w3" d="M293,149L297,147L295,149L291,149Z"/><path class="w3" d="M297,147L302,145L300,144L295,149Z"/><path class="w3" d="M302,145L307,141L304,143L300,144Z"/><path class="w3" d="M307,141L312,140L308,143L304,143Z"/><path class="w3" d="M312,140L317,138L313,139L308,143Z"/><path class="w3" d="M317,138L322,138L317,140L313,139Z"/><path class="w3" d="M322,138L327,141L322,137L317,140Z"/><path class="w3" d="M327,141L332,137L326,138L322,137Z"/><path class="w3" d="M332,137L336,142L331,136L326,138Z"/><path class="w3" d="M336,142L341,135L335,133L331,136Z"/><path class="w3" d="M341,135L346,134L339,132L335,133Z"/><path class="w3" d="M346,134L351,133L344,135L339,132Z"/><path class="w3" d="M351,133L356,129L348,136L344,135Z"/><path class="w3" d="M356,129L361,131L353,132L348,136Z"/><path class="w3" d="M361,131L366,141L357,132L353,132Z"/><path class="w3" d="M366,141L371,140L362,143L357,132Z"/><path class="w3" d="M371,140L376,130L366,134L362,143Z"/><path class="w3" d="M376,130L380,131L371,137L366,134Z"/><path class="w3" d="M380,131L385,133L375,131L371,137Z"/><path class="w3" d="M385,133L390,133L379,141L375,131Z"/><path class="w3" d="M390,133L395,135L384,138L379,141Z"/><path class="w3" d="M395,135L400,129L388,138L384,138Z"/><path class="w3" d="M400,129L405,130L393,137L388,138Z"/><path class="w3" d="M405,130L410,141L397,131L393,137Z"/><path class="w3" d="M410,141L415,132L402,128L397,131Z"/><path class="w3" d="M415,132L420,137L406,129L402,128Z"/><path class="w3" d="M420,137L424,130L411,130L406,129Z"/><path class="w3" d="M424,130L429,131L415,128L411,130Z"/><path class="w3" d="M429,131L434,125L419,134L415,128Z"/><path class="w3" d="M434,125L439,121L424,133L419,134Z"/><path class="w3" d="M439,121L444,126L428,129L424,133Z"/><path class="w3" d="M444,126L449,128L433,138L428,129Z"/><path class="w3" d="M449,128L454,130L437,127L433,138Z"/><path class="w3" d="M454,130L459,137L442,122L437,127Z"/><path class="w3" d="M459,137L463,124L446,124L442,122Z"/><path class="w3" d="M463,124L468,137L450,142L446,124Z"/><path class="w3" d="M468,137L473,135L455,124L450,142Z"/><path class="w3" d="M473,135L478,129L459,140L455,124Z"/><path class="w3" d="M478,129L483,136L464,142L459,140Z"/><path class="w3" d="M483,136L488,122L468,130L464,142Z"/><path class="w3" d="M488,122L493,129L473,134L468,130Z"/><path class="w3" d="M493,129L498,121L477,138L473,134Z"/><path class="w3" d="M498,121L503,143L482,129L477,138Z"/><path class="w3" d="M503,143L507,133L486,132L482,129Z"/><path class="w3" d="M507,133L512,135L490,132L486,132Z"/><path class="w3" d="M512,135L517,128L495,131L490,132Z"/><path class="w3" d="M517,128L522,125L499,127L495,131Z"/><path class="w3" d="M522,125L527,126L504,123L499,127Z"/><path class="w3" d="M527,126L532,117L508,124L504,123Z"/><path class="w3" d="M532,117L537,130L513,126L508,124Z"/><path class="w3" d="M537,130L542,134L517,124L513,126Z"/><path class="w3" d="M542,134L546,125L522,132L517,124Z"/><path class="w3" d="M546,125L551,130L526,129L522,132Z"/><path class="w3" d="M551,130L556,137L530,141L526,129Z"/><path class="w3" d="M556,137L561,121L535,142L530,141Z"/><path class="w3" d="M255,153L249,149L251,150L256,153Z"/><path class="w3" d="M249,149L244,145L247,148L251,150Z"/><path class="w3" d="M244,145L239,148L242,143L247,148Z"/><path class="w3" d="M239,148L233,146L237,145L242,143Z"/><path class="w3" d="M233,146L228,139L232,139L237,145Z"/><path class="w3" d="M228,139L223,136L227,138L232,139Z"/><path class="w3" d="M223,136L217,134L222,136L227,138Z"/><path class="w3" d="M217,134L212,132L217,139L222,136Z"/><path class="w3" d="M212,132L206,133L212,134L217,139Z"/><path class="w3" d="M206,133L201,135L208,131L212,134Z"/><path class="w3" d="M201,135L196,141L203,137L208,131Z"/><path class="w3" d="M196,141L190,136L198,139L203,137Z"/><path class="w3" d="M190,136L185,125L193,129L198,139Z"/><path class="w3" d="M185,125L180,141L188,135L193,129Z"/><path class="w3" d="M180,141L174,140L183,129L188,135Z"/><path class="w3" d="M174,140L169,133L178,139L183,129Z"/><path class="w3" d="M169,133L163,143L173,123L178,139Z"/><path class="w3" d="M163,143L158,137L168,138L173,123Z"/><path class="w3" d="M158,137L153,139L164,142L168,138Z"/><path class="w3" d="M153,139L147,141L159,133L164,142Z"/><path class="w3" d="M147,141L142,128L154,134L159,133Z"/><path class="w3" d="M142,128L137,128L149,129L154,134Z"/><path class="w3" d="M137,128L131,125L144,128L149,129Z"/><path class="w3" d="M131,125L126,118L139,121L144,128Z"/><path class="w3" d="M126,118L120,124L134,125L139,121Z"/><path class="w3" d="M120,124L115,116L129,132L134,125Z"/><path class="w3" d="M115,116L110,142L124,144L129,132Z"/><path class="w3" d="M110,142L104,140L120,134L124,144Z"/><path class="w3" d="M104,140L99,142L115,139L120,134Z"/><path class="w3" d="M99,142L94,135L110,130L115,139Z"/><path class="w3" d="M94,135L88,118L105,125L110,130Z"/><path class="w3" d="M88,118L83,115L100,130L105,125Z"/><path class="w3" d="M83,115L78,129L95,140L100,130Z"/><path class="w3" d="M78,129L72,141L90,131L95,140Z"/><path class="w3" d="M72,141L67,135L85,129L90,131Z"/><path class="w3" d="M67,135L61,125L81,124L85,129Z"/><path class="w3" d="M61,125L56,132L76,116L81,124Z"/><path class="w3" d="M56,132L51,120L71,134L76,116Z"/><path class="w3" d="M51,120L45,120L66,132L71,134Z"/><path class="w3" d="M45,120L40,128L61,140L66,132Z"/><path class="w3" d="M40,128L35,125L56,122L61,140Z"/><path class="w3" d="M35,125L29,120L51,133L56,122Z"/><path class="w3" d="M29,120L24,128L46,122L51,133Z"/><path class="w3" d="M24,128L18,137L41,123L46,122Z"/><path class="w3" d="M18,137L13,117L37,132L41,123Z"/><path class="w3" d="M13,117L8,117L32,120L37,132Z"/><path class="w3" d="M8,117L2,139L27,127L32,120Z"/><path class="w3" d="M2,139L-3,121L22,131L27,127Z"/><path class="w3" d="M-3,121L-8,128L17,125L22,131Z"/><path class="w3" d="M-8,128L-14,140L12,119L17,125Z"/><path class="w3" d="M-14,140L-19,139L7,130L12,119Z"/><path class="w3" d="M-19,139L-25,139L2,131L7,130Z"/><path class="w3" d="M-25,139L-30,122L-2,136L2,131Z"/><path class="w3" d="M289,153L295,149L293,149L288,153Z"/><path class="w3" d="M295,149L300,149L297,147L293,149Z"/><path class="w3" d="M300,149L305,143L302,145L297,147Z"/><path class="w3" d="M305,143L311,140L307,141L302,145Z"/><path class="w3" d="M311,140L316,142L312,140L307,141Z"/><path class="w3" d="M316,142L321,137L317,138L312,140Z"/><path class="w3" d="M321,137L327,137L322,138L317,138Z"/><path class="w3" d="M327,137L332,133L327,141L322,138Z"/><path class="w3" d="M332,133L338,136L332,137L327,141Z"/><path class="w3" d="M338,136L343,136L336,142L332,137Z"/><path class="w3" d="M343,136L348,139L341,135L336,142Z"/><path class="w3" d="M348,139L354,130L346,134L341,135Z"/><path class="w3" d="M354,130L359,132L351,133L346,134Z"/><path class="w3" d="M359,132L364,127L356,129L351,133Z"/><path class="w3" d="M364,127L370,139L361,131L356,129Z"/><path class="w3" d="M370,139L375,127L366,141L361,131Z"/><path class="w3" d="M375,127L381,142L371,140L366,141Z"/><path class="w3" d="M381,142L386,127L376,130L371,140Z"/><path class="w3" d="M386,127L391,125L380,131L376,130Z"/><path class="w3" d="M391,125L397,131L385,133L380,131Z"/><path class="w3" d="M397,131L402,128L390,133L385,133Z"/><path class="w3" d="M402,128L407,131L395,135L390,133Z"/><path class="w3" d="M407,131L413,140L400,129L395,135Z"/><path class="w3" d="M413,140L418,125L405,130L400,129Z"/><path class="w3" d="M418,125L424,129L410,141L405,130Z"/><path class="w3" d="M424,129L429,125L415,132L410,141Z"/><path class="w3" d="M429,125L434,143L420,137L415,132Z"/><path class="w3" d="M434,143L440,142L424,130L420,137Z"/><path class="w3" d="M440,142L445,137L429,131L424,130Z"/><path class="w3" d="M445,137L450,120L434,125L429,131Z"/><path class="w3" d="M450,120L456,140L439,121L434,125Z"/><path class="w3" d="M456,140L461,141L444,126L439,121Z"/><path class="w3" d="M461,141L466,132L449,128L444,126Z"/><path class="w3" d="M466,132L472,132L454,130L449,128Z"/><path class="w3" d="M472,132L477,119L459,137L454,130Z"/><path class="w3" d="M477,119L483,119L463,124L459,137Z"/><path class="w3" d="M483,119L488,136L468,137L463,124Z"/><path class="w3" d="M488,136L493,123L473,135L468,137Z"/><path class="w3" d="M493,123L499,133L478,129L473,135Z"/><path class="w3" d="M499,133L504,119L483,136L478,129Z"/><path class="w3" d="M504,119L509,125L488,122L483,136Z"/><path class="w3" d="M509,125L515,140L493,129L488,122Z"/><path class="w3" d="M515,140L520,133L498,121L493,129Z"/><path class="w3" d="M520,133L526,133L503,143L498,121Z"/><path class="w3" d="M526,133L531,132L507,133L503,143Z"/><path class="w3" d="M531,132L536,127L512,135L507,133Z"/><path class="w3" d="M536,127L542,122L517,128L512,135Z"/><path class="w3" d="M542,122L547,129L522,125L517,128Z"/><path class="w3" d="M547,129L552,126L527,126L522,125Z"/><path class="w3" d="M552,126L558,119L532,117L527,126Z"/><path class="w3" d="M558,119L563,125L537,130L532,117Z"/><path class="w3" d="M253,154L247,149L249,149L255,153Z"/><path class="w3" d="M247,149L241,146L244,145L249,149Z"/><path class="w3" d="M241,146L235,150L239,148L244,145Z"/><path class="w3" d="M235,150L229,147L233,146L239,148Z"/><path class="w3" d="M229,147L224,137L228,139L233,146Z"/><path class="w3" d="M224,137L218,134L223,136L228,139Z"/><path class="w3" d="M218,134L212,132L217,134L223,136Z"/><path class="w3" d="M212,132L206,133L212,132L217,134Z"/><path class="w3" d="M206,133L200,134L206,133L212,132Z"/><path class="w3" d="M200,134L194,133L201,135L206,133Z"/><path class="w3" d="M194,133L188,143L196,141L201,135Z"/><path class="w3" d="M188,143L182,125L190,136L196,141Z"/><path class="w3" d="M182,125L176,133L185,125L190,136Z"/><path class="w3" d="M176,133L170,127L180,141L185,125Z"/><path class="w3" d="M170,127L164,131L174,140L180,141Z"/><path class="w3" d="M164,131L159,137L169,133L174,140Z"/><path class="w3" d="M159,137L153,129L163,143L169,133Z"/><path class="w3" d="M153,129L147,131L158,137L163,143Z"/><path class="w3" d="M147,131L141,134L153,139L158,137Z"/><path class="w3" d="M141,134L135,120L147,141L153,139Z"/><path class="w3" d="M135,120L129,137L142,128L147,141Z"/><path class="w3" d="M129,137L123,140L137,128L142,128Z"/><path class="w3" d="M123,140L117,136L131,125L137,128Z"/><path class="w3" d="M117,136L111,127L126,118L131,125Z"/><path class="w3" d="M111,127L105,115L120,124L126,118Z"/><path class="w3" d="M105,115L99,129L115,116L120,124Z"/><path class="w3" d="M99,129L94,133L110,142L115,116Z"/><path class="w3" d="M94,133L88,122L104,140L110,142Z"/><path class="w3" d="M88,122L82,134L99,142L104,140Z"/><path class="w3" d="M82,134L76,127L94,135L99,142Z"/><path class="w3" d="M76,127L70,133L88,118L94,135Z"/><path class="w3" d="M70,133L64,117L83,115L88,118Z"/><path class="w3" d="M64,117L58,137L78,129L83,115Z"/><path class="w3" d="M58,137L52,138L72,141L78,129Z"/><path class="w3" d="M52,138L46,135L67,135L72,141Z"/><path class="w3" d="M46,135L40,133L61,125L67,135Z"/><path class="w3" d="M40,133L34,121L56,132L61,125Z"/><path class="w3" d="M34,121L29,120L51,120L56,132Z"/><path class="w3" d="M29,120L23,117L45,120L51,120Z"/><path class="w3" d="M23,117L17,125L40,128L45,120Z"/><path class="w3" d="M17,125L11,139L35,125L40,128Z"/><path class="w3" d="M11,139L5,120L29,120L35,125Z"/><path class="w3" d="M5,120L-1,133L24,128L29,120Z"/><path class="w3" d="M-1,133L-7,134L18,137L24,128Z"/><path class="w3" d="M-7,134L-13,126L13,117L18,137Z"/><path class="w3" d="M-13,126L-19,116L8,117L13,117Z"/><path class="w3" d="M-19,116L-25,130L2,139L8,117Z"/><path class="w3" d="M-25,130L-31,131L-3,121L2,139Z"/><path class="w3" d="M291,154L297,152L295,149L289,153Z"/><path class="w3" d="M297,152L303,151L300,149L295,149Z"/><path class="w3" d="M303,151L309,147L305,143L300,149Z"/><path class="w3" d="M309,147L315,139L311,140L305,143Z"/><path class="w3" d="M315,139L320,137L316,142L311,140Z"/><path class="w3" d="M320,137L326,135L321,137L316,142Z"/><path class="w3" d="M326,135L332,141L327,137L321,137Z"/><path class="w3" d="M332,141L338,139L332,133L327,137Z"/><path class="w3" d="M338,139L344,131L338,136L332,133Z"/><path class="w3" d="M344,131L350,145L343,136L338,136Z"/><path class="w3" d="M350,145L356,139L348,139L343,136Z"/><path class="w3" d="M356,139L362,129L354,130L348,139Z"/><path class="w3" d="M362,129L368,126L359,132L354,130Z"/><path class="w3" d="M368,126L374,125L364,127L359,132Z"/><path class="w3" d="M374,125L380,125L370,139L364,127Z"/><path class="w3" d="M380,125L385,132L375,127L370,139Z"/><path class="w3" d="M385,132L391,126L381,142L375,127Z"/><path class="w3" d="M391,126L397,124L386,127L381,142Z"/><path class="w3" d="M397,124L403,124L391,125L386,127Z"/><path class="w3" d="M403,124L409,123L397,131L391,125Z"/><path class="w3" d="M409,123L415,124L402,128L397,131Z"/><path class="w3" d="M415,124L421,125L407,131L402,128Z"/><path class="w3" d="M421,125L427,125L413,140L407,131Z"/><path class="w3" d="M427,125L433,131L418,125L413,140Z"/><path class="w3" d="M433,131L439,125L424,129L418,125Z"/><path class="w3" d="M439,125L445,118L429,125L424,129Z"/><path class="w3" d="M445,118L450,126L434,143L429,125Z"/><path class="w3" d="M450,126L456,144L440,142L434,143Z"/><path class="w3" d="M456,144L462,128L445,137L440,142Z"/><path class="w3" d="M462,128L468,117L450,120L445,137Z"/><path class="w3" d="M468,117L474,122L456,140L450,120Z"/><path class="w3" d="M474,122L480,132L461,141L456,140Z"/><path class="w3" d="M480,132L486,118L466,132L461,141Z"/><path class="w3" d="M486,118L492,119L472,132L466,132Z"/><path class="w3" d="M492,119L498,133L477,119L472,132Z"/><path class="w3" d="M498,133L504,118L483,119L477,119Z"/><path class="w3" d="M504,118L510,119L488,136L483,119Z"/><path class="w3" d="M510,119L515,142L493,123L488,136Z"/><path class="w3" d="M515,142L521,114L499,133L493,123Z"/><path class="w3" d="M521,114L527,127L504,119L499,133Z"/><path class="w3" d="M527,127L533,117L509,125L504,119Z"/><path class="w3" d="M533,117L539,143L515,140L509,125Z"/><path class="w3" d="M539,143L545,135L520,133L515,140Z"/><path class="w3" d="M545,135L551,136L526,133L520,133Z"/><path class="w3" d="M551,136L557,138L531,132L526,133Z"/><path class="w3" d="M557,138L563,122L536,127L531,132Z"/><path class="w3" d="M251,155L245,151L247,149L253,154Z"/><path class="w3" d="M245,151L238,148L241,146L247,149Z"/><path class="w3" d="M238,148L232,142L235,150L241,146Z"/><path class="w3" d="M232,142L225,138L229,147L235,150Z"/><path class="w3" d="M225,138L219,137L224,137L229,147Z"/><path class="w3" d="M219,137L212,134L218,134L224,137Z"/><path class="w3" d="M212,134L206,134L212,132L218,134Z"/><path class="w3" d="M206,134L199,134L206,133L212,132Z"/><path class="w3" d="M199,134L193,126L200,134L206,133Z"/><path class="w3" d="M193,126L186,135L194,133L200,134Z"/><path class="w3" d="M186,135L180,122L188,143L194,133Z"/><path class="w3" d="M180,122L173,123L182,125L188,143Z"/><path class="w3" d="M173,123L167,139L176,133L182,125Z"/><path class="w3" d="M167,139L160,132L170,127L176,133Z"/><path class="w3" d="M160,132L154,139L164,131L170,127Z"/><path class="w3" d="M154,139L147,128L159,137L164,131Z"/><path class="w3" d="M147,128L141,137L153,129L159,137Z"/><path class="w3" d="M141,137L134,117L147,131L153,129Z"/><path class="w3" d="M134,117L128,128L141,134L147,131Z"/><path class="w3" d="M128,128L121,113L135,120L141,134Z"/><path class="w3" d="M121,113L115,139L129,137L135,120Z"/><path class="w3" d="M115,139L108,122L123,140L129,137Z"/><path class="w3" d="M108,122L102,144L117,136L123,140Z"/><path class="w3" d="M102,144L95,142L111,127L117,136Z"/><path class="w3" d="M95,142L89,120L105,115L111,127Z"/><path class="w3" d="M89,120L82,106L99,129L105,115Z"/><path class="w3" d="M82,106L76,115L94,133L99,129Z"/><path class="w3" d="M76,115L69,114L88,122L94,133Z"/><path class="w3" d="M69,114L63,116L82,134L88,122Z"/><path class="w3" d="M63,116L56,125L76,127L82,134Z"/><path class="w3" d="M56,125L50,140L70,133L76,127Z"/><path class="w3" d="M50,140L43,126L64,117L70,133Z"/><path class="w3" d="M43,126L37,137L58,137L64,117Z"/><path class="w3" d="M37,137L30,126L52,138L58,137Z"/><path class="w3" d="M30,126L24,131L46,135L52,138Z"/><path class="w3" d="M24,131L17,123L40,133L46,135Z"/><path class="w3" d="M17,123L11,131L34,121L40,133Z"/><path class="w3" d="M11,131L4,117L29,120L34,121Z"/><path class="w3" d="M4,117L-2,124L23,117L29,120Z"/><path class="w3" d="M-2,124L-9,124L17,125L23,117Z"/><path class="w3" d="M-9,124L-15,138L11,139L17,125Z"/><path class="w3" d="M-15,138L-22,125L5,120L11,139Z"/><path class="w3" d="M-22,125L-28,121L-1,133L5,120Z"/><path class="w3" d="M-28,121L-35,116L-7,134L-1,133Z"/><path class="w3" d="M293,155L299,152L297,152L291,154Z"/><path class="w3" d="M299,152L306,152L303,151L297,152Z"/><path class="w3" d="M306,152L312,144L309,147L303,151Z"/><path class="w3" d="M312,144L319,138L315,139L309,147Z"/><path class="w3" d="M319,138L325,140L320,137L315,139Z"/><path class="w3" d="M325,140L332,140L326,135L320,137Z"/><path class="w3" d="M332,140L338,134L332,141L326,135Z"/><path class="w3" d="M338,134L345,138L338,139L332,141Z"/><path class="w3" d="M345,138L351,142L344,131L338,139Z"/><path class="w3" d="M351,142L358,144L350,145L344,131Z"/><path class="w3" d="M358,144L364,129L356,139L350,145Z"/><path class="w3" d="M364,129L371,125L362,129L356,139Z"/><path class="w3" d="M371,125L377,125L368,126L362,129Z"/><path class="w3" d="M377,125L384,126L374,125L368,126Z"/><path class="w3" d="M384,126L390,124L380,125L374,125Z"/><path class="w3" d="M390,124L397,124L385,132L380,125Z"/><path class="w3" d="M397,124L403,132L391,126L385,132Z"/><path class="w3" d="M403,132L410,128L397,124L391,126Z"/><path class="w3" d="M410,128L416,123L403,124L397,124Z"/><path class="w3" d="M416,123L423,122L409,123L403,124Z"/><path class="w3" d="M423,122L429,122L415,124L409,123Z"/><path class="w3" d="M429,122L436,122L421,125L415,124Z"/><path class="w3" d="M436,122L442,128L427,125L421,125Z"/><path class="w3" d="M442,128L449,140L433,131L427,125Z"/><path class="w3" d="M449,140L455,132L439,125L433,131Z"/><path class="w3" d="M455,132L462,135L445,118L439,125Z"/><path class="w3" d="M462,135L468,122L450,126L445,118Z"/><path class="w3" d="M468,122L475,121L456,144L450,126Z"/><path class="w3" d="M475,121L481,119L462,128L456,144Z"/><path class="w3" d="M481,119L488,113L468,117L462,128Z"/><path class="w3" d="M488,113L494,138L474,122L468,117Z"/><path class="w3" d="M494,138L501,134L480,132L474,122Z"/><path class="w3" d="M501,134L507,136L486,118L480,132Z"/><path class="w3" d="M507,136L514,127L492,119L486,118Z"/><path class="w3" d="M514,127L520,111L498,133L492,119Z"/><path class="w3" d="M520,111L527,125L504,118L498,133Z"/><path class="w3" d="M527,125L533,117L510,119L504,118Z"/><path class="w3" d="M533,117L540,137L515,142L510,119Z"/><path class="w3" d="M540,137L546,131L521,114L515,142Z"/><path class="w3" d="M546,131L553,115L527,127L521,114Z"/><path class="w3" d="M553,115L559,132L533,117L527,127Z"/><path class="w3" d="M249,156L242,151L245,151L251,155Z"/><path class="w3" d="M242,151L235,149L238,148L245,151Z"/><path class="w3" d="M235,149L228,148L232,142L238,148Z"/><path class="w3" d="M228,148L221,137L225,138L232,142Z"/><path class="w3" d="M221,137L213,137L219,137L225,138Z"/><path class="w3" d="M213,137L206,132L212,134L219,137Z"/><path class="w3" d="M206,132L199,132L206,134L212,134Z"/><path class="w3" d="M199,132L192,127L199,134L206,134Z"/><path class="w3" d="M192,127L185,125L193,126L199,134Z"/><path class="w3" d="M185,125L178,121L186,135L193,126Z"/><path class="w3" d="M178,121L170,121L180,122L186,135Z"/><path class="w3" d="M170,121L163,130L173,123L180,122Z"/><path class="w3" d="M163,130L156,131L167,139L173,123Z"/><path class="w3" d="M156,131L149,132L160,132L167,139Z"/><path class="w3" d="M149,132L142,121L154,139L160,132Z"/><path class="w3" d="M142,121L135,138L147,128L154,139Z"/><path class="w3" d="M135,138L128,128L141,137L147,128Z"/><path class="w3" d="M128,128L120,111L134,117L141,137Z"/><path class="w3" d="M120,111L113,136L128,128L134,117Z"/><path class="w3" d="M113,136L106,115L121,113L128,128Z"/><path class="w3" d="M106,115L99,117L115,139L121,113Z"/><path class="w3" d="M99,117L92,122L108,122L115,139Z"/><path class="w3" d="M92,122L85,133L102,144L108,122Z"/><path class="w3" d="M85,133L77,139L95,142L102,144Z"/><path class="w3" d="M77,139L70,112L89,120L95,142Z"/><path class="w3" d="M70,112L63,114L82,106L89,120Z"/><path class="w3" d="M63,114L56,116L76,115L82,106Z"/><path class="w3" d="M56,116L49,135L69,114L76,115Z"/><path class="w3" d="M49,135L42,120L63,116L69,114Z"/><path class="w3" d="M42,120L35,132L56,125L63,116Z"/><path class="w3" d="M35,132L27,136L50,140L56,125Z"/><path class="w3" d="M27,136L20,125L43,126L50,140Z"/><path class="w3" d="M20,125L13,122L37,137L43,126Z"/><path class="w3" d="M13,122L6,138L30,126L37,137Z"/><path class="w3" d="M6,138L-1,117L24,131L30,126Z"/><path class="w3" d="M-1,117L-8,118L17,123L24,131Z"/><path class="w3" d="M-8,118L-15,115L11,131L17,123Z"/><path class="w3" d="M-15,115L-23,115L4,117L11,131Z"/><path class="w3" d="M-23,115L-30,118L-2,124L4,117Z"/><path class="w3" d="M295,156L302,152L299,152L293,155Z"/><path class="w3" d="M302,152L309,149L306,152L299,152Z"/><path class="w3" d="M309,149L316,146L312,144L306,152Z"/><path class="w3" d="M316,146L323,138L319,138L312,144Z"/><path class="w3" d="M323,138L331,135L325,140L319,138Z"/><path class="w3" d="M331,135L338,132L332,140L325,140Z"/><path class="w3" d="M338,132L345,140L338,134L332,140Z"/><path class="w3" d="M345,140L352,131L345,138L338,134Z"/><path class="w3" d="M352,131L359,128L351,142L345,138Z"/><path class="w3" d="M359,128L366,135L358,144L351,142Z"/><path class="w3" d="M366,135L374,139L364,129L358,144Z"/><path class="w3" d="M374,139L381,124L371,125L364,129Z"/><path class="w3" d="M381,124L388,125L377,125L371,125Z"/><path class="w3" d="M388,125L395,125L384,126L377,125Z"/><path class="w3" d="M395,125L402,130L390,124L384,126Z"/><path class="w3" d="M402,130L409,127L397,124L390,124Z"/><path class="w3" d="M409,127L416,123L403,132L397,124Z"/><path class="w3" d="M416,123L424,134L410,128L403,132Z"/><path class="w3" d="M424,134L431,121L416,123L410,128Z"/><path class="w3" d="M431,121L438,119L423,122L416,123Z"/><path class="w3" d="M438,119L445,121L429,122L423,122Z"/><path class="w3" d="M445,121L452,114L436,122L429,122Z"/><path class="w3" d="M452,114L459,119L442,128L436,122Z"/><path class="w3" d="M459,119L467,115L449,140L442,128Z"/><path class="w3" d="M467,115L474,136L455,132L449,140Z"/><path class="w3" d="M474,136L481,127L462,135L455,132Z"/><path class="w3" d="M481,127L488,130L468,122L462,135Z"/><path class="w3" d="M488,130L495,123L475,121L468,122Z"/><path class="w3" d="M495,123L502,113L481,119L475,121Z"/><path class="w3" d="M502,113L509,115L488,113L481,119Z"/><path class="w3" d="M509,115L517,110L494,138L488,113Z"/><path class="w3" d="M517,110L524,110L501,134L494,138Z"/><path class="w3" d="M524,110L531,105L507,136L501,134Z"/><path class="w3" d="M531,105L538,113L514,127L507,136Z"/><path class="w3" d="M538,113L545,113L520,111L514,127Z"/><path class="w3" d="M545,113L552,135L527,125L520,111Z"/><path class="w3" d="M552,135L559,127L533,117L527,125Z"/><path class="w3" d="M247,156L239,150L242,151L249,156Z"/><path class="w3" d="M239,150L231,153L235,149L242,151Z"/><path class="w3" d="M231,153L223,142L228,148L235,149Z"/><path class="w3" d="M223,142L215,138L221,137L228,148Z"/><path class="w3" d="M215,138L207,132L213,137L221,137Z"/><path class="w3" d="M207,132L200,131L206,132L213,137Z"/><path class="w3" d="M200,131L192,141L199,132L206,132Z"/><path class="w3" d="M192,141L184,123L192,127L199,132Z"/><path class="w3" d="M184,123L176,120L185,125L192,127Z"/><path class="w3" d="M176,120L168,124L178,121L185,125Z"/><path class="w3" d="M168,124L160,138L170,121L178,121Z"/><path class="w3" d="M160,138L152,127L163,130L170,121Z"/><path class="w3" d="M152,127L145,125L156,131L163,130Z"/><path class="w3" d="M145,125L137,118L149,132L156,131Z"/><path class="w3" d="M137,118L129,112L142,121L149,132Z"/><path class="w3" d="M129,112L121,107L135,138L142,121Z"/><path class="w3" d="M121,107L113,136L128,128L135,138Z"/><path class="w3" d="M113,136L105,109L120,111L128,128Z"/><path class="w3" d="M105,109L97,120L113,136L120,111Z"/><path class="w3" d="M97,120L90,109L106,115L113,136Z"/><path class="w3" d="M90,109L82,124L99,117L106,115Z"/><path class="w3" d="M82,124L74,123L92,122L99,117Z"/><path class="w3" d="M74,123L66,125L85,133L92,122Z"/><path class="w3" d="M66,125L58,138L77,139L85,133Z"/><path class="w3" d="M58,138L50,127L70,112L77,139Z"/><path class="w3" d="M50,127L42,119L63,114L70,112Z"/><path class="w3" d="M42,119L34,139L56,116L63,114Z"/><path class="w3" d="M34,139L27,138L49,135L56,116Z"/><path class="w3" d="M27,138L19,115L42,120L49,135Z"/><path class="w3" d="M19,115L11,117L35,132L42,120Z"/><path class="w3" d="M11,117L3,120L27,136L35,132Z"/><path class="w3" d="M3,120L-5,139L20,125L27,136Z"/><path class="w3" d="M-5,139L-13,141L13,122L20,125Z"/><path class="w3" d="M-13,141L-21,130L6,138L13,122Z"/><path class="w3" d="M-21,130L-28,115L-1,117L6,138Z"/><path class="w3" d="M-28,115L-36,117L-8,118L-1,117Z"/><path class="w3" d="M297,156L305,150L302,152L295,156Z"/><path class="w3" d="M305,150L313,152L309,149L302,152Z"/><path class="w3" d="M313,152L321,144L316,146L309,149Z"/><path class="w3" d="M321,144L329,145L323,138L316,146Z"/><path class="w3" d="M329,145L337,139L331,135L323,138Z"/><path class="w3" d="M337,139L344,130L338,132L331,135Z"/><path class="w3" d="M344,130L352,129L345,140L338,132Z"/><path class="w3" d="M352,129L360,128L352,131L345,140Z"/><path class="w3" d="M360,128L368,130L359,128L352,131Z"/><path class="w3" d="M368,130L376,124L366,135L359,128Z"/><path class="w3" d="M376,124L384,124L374,139L366,135Z"/><path class="w3" d="M384,124L392,125L381,124L374,139Z"/><path class="w3" d="M392,125L399,133L388,125L381,124Z"/><path class="w3" d="M399,133L407,142L395,125L388,125Z"/><path class="w3" d="M407,142L415,126L402,130L395,125Z"/><path class="w3" d="M415,126L423,125L409,127L402,130Z"/><path class="w3" d="M423,125L431,120L416,123L409,127Z"/><path class="w3" d="M431,120L439,117L424,134L416,123Z"/><path class="w3" d="M439,117L447,116L431,121L424,134Z"/><path class="w3" d="M447,116L454,129L438,119L431,121Z"/><path class="w3" d="M454,129L462,112L445,121L438,119Z"/><path class="w3" d="M462,112L470,118L452,114L445,121Z"/><path class="w3" d="M470,118L478,141L459,119L452,114Z"/><path class="w3" d="M478,141L486,134L467,115L459,119Z"/><path class="w3" d="M486,134L494,110L474,136L467,115Z"/><path class="w3" d="M494,110L502,111L481,127L474,136Z"/><path class="w3" d="M502,111L510,116L488,130L481,127Z"/><path class="w3" d="M510,116L517,115L495,123L488,130Z"/><path class="w3" d="M517,115L525,139L502,113L495,123Z"/><path class="w3" d="M525,139L533,102L509,115L502,113Z"/><path class="w3" d="M533,102L541,125L517,110L509,115Z"/><path class="w3" d="M541,125L549,107L524,110L517,110Z"/><path class="w3" d="M549,107L557,118L531,105L524,110Z"/><path class="w3" d="M557,118L565,121L538,113L531,105Z"/><path class="w3" d="M244,158L236,151L239,150L247,156Z"/><path class="w3" d="M236,151L227,143L231,153L239,150Z"/><path class="w3" d="M227,143L218,149L223,142L231,153Z"/><path class="w3" d="M218,149L210,138L215,138L223,142Z"/><path class="w3" d="M210,138L201,144L207,132L215,138Z"/><path class="w3" d="M201,144L192,138L200,131L207,132Z"/><path class="w3" d="M192,138L184,139L192,141L200,131Z"/><path class="w3" d="M184,139L175,120L184,123L192,141Z"/><path class="w3" d="M175,120L166,128L176,120L184,123Z"/><path class="w3" d="M166,128L158,131L168,124L176,120Z"/><path class="w3" d="M158,131L149,125L160,138L168,124Z"/><path class="w3" d="M149,125L140,119L152,127L160,138Z"/><path class="w3" d="M140,119L132,113L145,125L152,127Z"/><path class="w3" d="M132,113L123,113L137,118L145,125Z"/><path class="w3" d="M123,113L115,111L129,112L137,118Z"/><path class="w3" d="M115,111L106,97L121,107L129,112Z"/><path class="w3" d="M106,97L97,122L113,136L121,107Z"/><path class="w3" d="M97,122L89,129L105,109L113,136Z"/><path class="w3" d="M89,129L80,108L97,120L105,109Z"/><path class="w3" d="M80,108L71,126L90,109L97,120Z"/><path class="w3" d="M71,126L63,123L82,124L90,109Z"/><path class="w3" d="M63,123L54,121L74,123L82,124Z"/><path class="w3" d="M54,121L45,122L66,125L74,123Z"/><path class="w3" d="M45,122L37,124L58,138L66,125Z"/><path class="w3" d="M37,124L28,122L50,127L58,138Z"/><path class="w3" d="M28,122L19,122L42,119L50,127Z"/><path class="w3" d="M19,122L11,143L34,139L42,119Z"/><path class="w3" d="M11,143L2,115L27,138L34,139Z"/><path class="w3" d="M2,115L-7,135L19,115L27,138Z"/><path class="w3" d="M-7,135L-15,116L11,117L19,115Z"/><path class="w3" d="M-15,116L-24,118L3,120L11,117Z"/><path class="w3" d="M-24,118L-33,125L-5,139L3,120Z"/><path class="w3" d="M300,158L308,149L305,150L297,156Z"/><path class="w3" d="M308,149L317,143L313,152L305,150Z"/><path class="w3" d="M317,143L326,149L321,144L313,152Z"/><path class="w3" d="M326,149L334,140L329,145L321,144Z"/><path class="w3" d="M334,140L343,143L337,139L329,145Z"/><path class="w3" d="M343,143L352,131L344,130L337,139Z"/><path class="w3" d="M352,131L360,132L352,129L344,130Z"/><path class="w3" d="M360,132L369,126L360,128L352,129Z"/><path class="w3" d="M369,126L378,128L368,130L360,128Z"/><path class="w3" d="M378,128L386,138L376,124L368,130Z"/><path class="w3" d="M386,138L395,123L384,124L376,124Z"/><path class="w3" d="M395,123L404,135L392,125L384,124Z"/><path class="w3" d="M404,135L412,133L399,133L392,125Z"/><path class="w3" d="M412,133L421,125L407,142L399,133Z"/><path class="w3" d="M421,125L429,136L415,126L407,142Z"/><path class="w3" d="M429,136L438,118L423,125L415,126Z"/><path class="w3" d="M438,118L447,115L431,120L423,125Z"/><path class="w3" d="M447,115L455,132L439,117L431,120Z"/><path class="w3" d="M455,132L464,115L447,116L439,117Z"/><path class="w3" d="M464,115L473,131L454,129L447,116Z"/><path class="w3" d="M473,131L481,118L462,112L454,129Z"/><path class="w3" d="M481,118L490,139L470,118L462,112Z"/><path class="w3" d="M490,139L499,136L478,141L470,118Z"/><path class="w3" d="M499,136L507,126L486,134L478,141Z"/><path class="w3" d="M507,126L516,117L494,110L486,134Z"/><path class="w3" d="M516,117L525,108L502,111L494,110Z"/><path class="w3" d="M525,108L533,98L510,116L502,111Z"/><path class="w3" d="M533,98L542,129L517,115L510,116Z"/><path class="w3" d="M542,129L551,129L525,139L517,115Z"/><path class="w3" d="M551,129L559,133L533,102L525,139Z"/><path class="w2" d="M242,159L232,153L236,151L244,158Z"/><path class="w2" d="M232,153L223,142L227,143L236,151Z"/><path class="w2" d="M223,142L213,138L218,149L227,143Z"/><path class="w2" d="M213,138L203,133L210,138L218,149Z"/><path class="w2" d="M203,133L194,127L201,144L210,138Z"/><path class="w2" d="M194,127L184,144L192,138L201,144Z"/><path class="w2" d="M184,144L175,125L184,139L192,138Z"/><path class="w2" d="M175,125L165,127L175,120L184,139Z"/><path class="w2" d="M165,127L156,129L166,128L175,120Z"/><path class="w2" d="M156,129L146,129L158,131L166,128Z"/><path class="w2" d="M146,129L137,116L149,125L158,131Z"/><path class="w2" d="M137,116L127,126L140,119L149,125Z"/><path class="w2" d="M127,126L118,121L132,113L140,119Z"/><path class="w2" d="M118,121L108,133L123,113L132,113Z"/><path class="w2" d="M108,133L99,116L115,111L123,113Z"/><path class="w2" d="M99,116L89,103L106,97L115,111Z"/><path class="w2" d="M89,103L80,135L97,122L106,97Z"/><path class="w2" d="M80,135L70,133L89,129L97,122Z"/><path class="w2" d="M70,133L61,114L80,108L89,129Z"/><path class="w2" d="M61,114L51,117L71,126L80,108Z"/><path class="w2" d="M51,117L42,119L63,123L71,126Z"/><path class="w2" d="M42,119L32,126L54,121L63,123Z"/><path class="w2" d="M32,126L23,114L45,122L54,121Z"/><path class="w2" d="M23,114L13,114L37,124L45,122Z"/><path class="w2" d="M13,114L4,114L28,122L37,124Z"/><path class="w2" d="M4,114L-6,136L19,122L28,122Z"/><path class="w2" d="M-6,136L-15,119L11,143L19,122Z"/><path class="w2" d="M-15,119L-25,139L2,115L11,143Z"/><path class="w2" d="M-25,139L-34,114L-7,135L2,115Z"/><path class="w2" d="M302,159L312,152L308,149L300,158Z"/><path class="w2" d="M312,152L321,142L317,143L308,149Z"/><path class="w2" d="M321,142L331,139L326,149L317,143Z"/><path class="w2" d="M331,139L341,137L334,140L326,149Z"/><path class="w2" d="M341,137L350,130L343,143L334,140Z"/><path class="w2" d="M350,130L360,128L352,131L343,143Z"/><path class="w2" d="M360,128L369,140L360,132L352,131Z"/><path class="w2" d="M369,140L379,124L369,126L360,132Z"/><path class="w2" d="M379,124L388,131L378,128L369,126Z"/><path class="w2" d="M388,131L398,124L386,138L378,128Z"/><path class="w2" d="M398,124L407,123L395,123L386,138Z"/><path class="w2" d="M407,123L417,128L404,135L395,123Z"/><path class="w2" d="M417,128L426,127L412,133L404,135Z"/><path class="w2" d="M426,127L436,118L421,125L412,133Z"/><path class="w2" d="M436,118L445,114L429,136L421,125Z"/><path class="w2" d="M445,114L455,111L438,118L429,136Z"/><path class="w2" d="M455,111L464,133L447,115L438,118Z"/><path class="w2" d="M464,133L474,114L455,132L447,115Z"/><path class="w2" d="M474,114L483,112L464,115L455,132Z"/><path class="w2" d="M483,112L493,108L473,131L464,115Z"/><path class="w2" d="M493,108L502,111L481,118L473,131Z"/><path class="w2" d="M502,111L512,131L490,139L481,118Z"/><path class="w2" d="M512,131L521,143L499,136L490,139Z"/><path class="w2" d="M521,143L531,139L507,126L499,136Z"/><path class="w2" d="M531,139L540,130L516,117L507,126Z"/><path class="w2" d="M540,130L550,113L525,108L516,117Z"/><path class="w2" d="M550,113L559,125L533,98L525,108Z"/><path class="w2" d="M238,160L228,157L232,153L242,159Z"/><path class="w2" d="M228,157L218,151L223,142L232,153Z"/><path class="w2" d="M218,151L207,133L213,138L223,142Z"/><path class="w2" d="M207,133L197,131L203,133L213,138Z"/><path class="w2" d="M197,131L186,133L194,127L203,133Z"/><path class="w2" d="M186,133L176,133L184,144L194,127Z"/><path class="w2" d="M176,133L165,126L175,125L184,144Z"/><path class="w2" d="M165,126L155,128L165,127L175,125Z"/><path class="w2" d="M155,128L144,121L156,129L165,127Z"/><path class="w2" d="M144,121L134,119L146,129L156,129Z"/><path class="w2" d="M134,119L123,122L137,116L146,129Z"/><path class="w2" d="M123,122L113,117L127,126L137,116Z"/><path class="w2" d="M113,117L102,134L118,121L127,126Z"/><path class="w2" d="M102,134L92,106L108,133L118,121Z"/><path class="w2" d="M92,106L81,110L99,116L108,133Z"/><path class="w2" d="M81,110L71,109L89,103L99,116Z"/><path class="w2" d="M71,109L61,116L80,135L89,103Z"/><path class="w2" d="M61,116L50,119L70,133L80,135Z"/><path class="w2" d="M50,119L40,119L61,114L70,133Z"/><path class="w2" d="M40,119L29,115L51,117L61,114Z"/><path class="w2" d="M29,115L19,117L42,119L51,117Z"/><path class="w2" d="M19,117L8,114L32,126L42,119Z"/><path class="w2" d="M8,114L-2,122L23,114L32,126Z"/><path class="w2" d="M-2,122L-13,115L13,114L23,114Z"/><path class="w2" d="M-13,115L-23,121L4,114L13,114Z"/><path class="w2" d="M-23,121L-34,114L-6,136L4,114Z"/><path class="w2" d="M306,160L316,149L312,152L302,159Z"/><path class="w2" d="M316,149L326,145L321,142L312,152Z"/><path class="w2" d="M326,145L337,151L331,139L321,142Z"/><path class="w2" d="M337,151L347,140L341,137L331,139Z"/><path class="w2" d="M347,140L358,135L350,130L341,137Z"/><path class="w2" d="M358,135L368,135L360,128L350,130Z"/><path class="w2" d="M368,135L379,141L369,140L360,128Z"/><path class="w2" d="M379,141L389,133L379,124L369,140Z"/><path class="w2" d="M389,133L400,141L388,131L379,124Z"/><path class="w2" d="M400,141L410,125L398,124L388,131Z"/><path class="w2" d="M410,125L421,124L407,123L398,124Z"/><path class="w2" d="M421,124L431,130L417,128L407,123Z"/><path class="w2" d="M431,130L442,115L426,127L417,128Z"/><path class="w2" d="M442,115L452,112L436,118L426,127Z"/><path class="w2" d="M452,112L463,113L445,114L436,118Z"/><path class="w2" d="M463,113L473,111L455,111L445,114Z"/><path class="w2" d="M473,111L483,119L464,133L455,111Z"/><path class="w2" d="M483,119L494,109L474,114L464,133Z"/><path class="w2" d="M494,109L504,110L483,112L474,114Z"/><path class="w2" d="M504,110L515,117L493,108L483,112Z"/><path class="w2" d="M515,117L525,97L502,111L493,108Z"/><path class="w2" d="M525,97L536,122L512,131L502,111Z"/><path class="w2" d="M536,122L546,137L521,143L512,131Z"/><path class="w2" d="M546,137L557,128L531,139L521,143Z"/><path class="w2" d="M557,128L567,139L540,130L531,139Z"/><path class="w2" d="M235,161L224,158L228,157L238,160Z"/><path class="w2" d="M224,158L212,146L218,151L228,157Z"/><path class="w2" d="M212,146L201,131L207,133L218,151Z"/><path class="w2" d="M201,131L189,128L197,131L207,133Z"/><path class="w2" d="M189,128L178,133L186,133L197,131Z"/><path class="w2" d="M178,133L166,125L176,133L186,133Z"/><path class="w2" d="M166,125L155,128L165,126L176,133Z"/><path class="w2" d="M155,128L143,121L155,128L165,126Z"/><path class="w2" d="M143,121L131,113L144,121L155,128Z"/><path class="w2" d="M131,113L120,128L134,119L144,121Z"/><path class="w2" d="M120,128L108,93L123,122L134,119Z"/><path class="w2" d="M108,93L97,111L113,117L123,122Z"/><path class="w2" d="M97,111L85,125L102,134L113,117Z"/><path class="w2" d="M85,125L74,107L92,106L102,134Z"/><path class="w2" d="M74,107L62,112L81,110L92,106Z"/><path class="w2" d="M62,112L51,115L71,109L81,110Z"/><path class="w2" d="M51,115L39,118L61,116L71,109Z"/><path class="w2" d="M39,118L28,115L50,119L61,116Z"/><path class="w2" d="M28,115L16,115L40,119L50,119Z"/><path class="w2" d="M16,115L5,113L29,115L40,119Z"/><path class="w2" d="M5,113L-7,132L19,117L29,115Z"/><path class="w2" d="M-7,132L-18,114L8,114L19,117Z"/><path class="w2" d="M-18,114L-30,114L-2,122L8,114Z"/><path class="w2" d="M309,161L320,156L316,149L306,160Z"/><path class="w2" d="M320,156L332,143L326,145L316,149Z"/><path class="w2" d="M332,143L343,153L337,151L326,145Z"/><path class="w2" d="M343,153L355,133L347,140L337,151Z"/><path class="w2" d="M355,133L366,145L358,135L347,140Z"/><path class="w2" d="M366,145L378,145L368,135L358,135Z"/><path class="w2" d="M378,145L389,124L379,141L368,135Z"/><path class="w2" d="M389,124L401,133L389,133L379,141Z"/><path class="w2" d="M401,133L413,123L400,141L389,133Z"/><path class="w2" d="M413,123L424,123L410,125L400,141Z"/><path class="w2" d="M424,123L436,123L421,124L410,125Z"/><path class="w2" d="M436,123L447,124L431,130L421,124Z"/><path class="w2" d="M447,124L459,132L442,115L431,130Z"/><path class="w2" d="M459,132L470,111L452,112L442,115Z"/><path class="w2" d="M470,111L482,116L463,113L452,112Z"/><path class="w2" d="M482,116L493,110L473,111L463,113Z"/><path class="w2" d="M493,110L505,110L483,119L473,111Z"/><path class="w2" d="M505,110L516,135L494,109L483,119Z"/><path class="w2" d="M516,135L528,115L504,110L494,109Z"/><path class="w2" d="M528,115L539,117L515,117L504,110Z"/><path class="w2" d="M539,117L551,84L525,97L515,117Z"/><path class="w2" d="M551,84L562,103L536,122L525,97Z"/><path class="w2" d="M231,163L219,156L224,158L235,161Z"/><path class="w2" d="M219,156L206,148L212,146L224,158Z"/><path class="w2" d="M206,148L193,134L201,131L212,146Z"/><path class="w2" d="M193,134L181,125L189,128L201,131Z"/><path class="w2" d="M181,125L168,130L178,133L189,128Z"/><path class="w2" d="M168,130L155,129L166,125L178,133Z"/><path class="w2" d="M155,129L143,123L155,128L166,125Z"/><path class="w2" d="M143,123L130,119L143,121L155,128Z"/><path class="w2" d="M130,119L117,101L131,113L143,121Z"/><path class="w2" d="M117,101L105,118L120,128L131,113Z"/><path class="w2" d="M105,118L92,136L108,93L120,128Z"/><path class="w2" d="M92,136L79,118L97,111L108,93Z"/><path class="w2" d="M79,118L67,111L85,125L97,111Z"/><path class="w2" d="M67,111L54,123L74,107L85,125Z"/><path class="w2" d="M54,123L41,118L62,112L74,107Z"/><path class="w2" d="M41,118L29,115L51,115L62,112Z"/><path class="w2" d="M29,115L16,113L39,118L51,115Z"/><path class="w2" d="M16,113L3,126L28,115L39,118Z"/><path class="w2" d="M3,126L-9,135L16,115L28,115Z"/><path class="w2" d="M-9,135L-22,137L5,113L16,115Z"/><path class="w2" d="M-22,137L-35,119L-7,132L5,113Z"/><path class="w2" d="M313,163L325,156L320,156L309,161Z"/><path class="w2" d="M325,156L338,158L332,143L320,156Z"/><path class="w2" d="M338,158L351,153L343,153L332,143Z"/><path class="w2" d="M351,153L363,133L355,133L343,153Z"/><path class="w2" d="M363,133L376,129L366,145L355,133Z"/><path class="w2" d="M376,129L389,128L378,145L366,145Z"/><path class="w2" d="M389,128L401,140L389,124L378,145Z"/><path class="w2" d="M401,140L414,123L401,133L389,124Z"/><path class="w2" d="M414,123L427,121L413,123L401,133Z"/><path class="w2" d="M427,121L439,124L424,123L413,123Z"/><path class="w2" d="M439,124L452,130L436,123L424,123Z"/><path class="w2" d="M452,130L465,133L447,124L436,123Z"/><path class="w2" d="M465,133L477,113L459,132L447,124Z"/><path class="w2" d="M477,113L490,116L470,111L459,132Z"/><path class="w2" d="M490,116L503,109L482,116L470,111Z"/><path class="w2" d="M503,109L515,111L493,110L482,116Z"/><path class="w2" d="M515,111L528,123L505,110L493,110Z"/><path class="w2" d="M528,123L541,107L516,135L505,110Z"/><path class="w2" d="M541,107L553,124L528,115L516,135Z"/><path class="w2" d="M553,124L566,92L539,117L528,115Z"/><path class="w2" d="M227,165L213,156L219,156L231,163Z"/><path class="w2" d="M213,156L200,142L206,148L219,156Z"/><path class="w2" d="M200,142L186,151L193,134L206,148Z"/><path class="w2" d="M186,151L172,146L181,125L193,134Z"/><path class="w2" d="M172,146L158,143L168,130L181,125Z"/><path class="w2" d="M158,143L144,121L155,129L168,130Z"/><path class="w2" d="M144,121L130,130L143,123L155,129Z"/><path class="w2" d="M130,130L116,112L130,119L143,123Z"/><path class="w2" d="M116,112L102,133L117,101L130,119Z"/><path class="w2" d="M102,133L88,122L105,118L117,101Z"/><path class="w2" d="M88,122L74,143L92,136L105,118Z"/><path class="w2" d="M74,143L60,114L79,118L92,136Z"/><path class="w2" d="M60,114L46,126L67,111L79,118Z"/><path class="w2" d="M46,126L32,116L54,123L67,111Z"/><path class="w2" d="M32,116L18,119L41,118L54,123Z"/><path class="w2" d="M18,119L4,119L29,115L41,118Z"/><path class="w2" d="M4,119L-9,115L16,113L29,115Z"/><path class="w2" d="M-9,115L-23,118L3,126L16,113Z"/><path class="w2" d="M-23,118L-37,131L-9,135L3,126Z"/><path class="w2" d="M317,165L331,156L325,156L313,163Z"/><path class="w2" d="M331,156L344,159L338,158L325,156Z"/><path class="w2" d="M344,159L358,145L351,153L338,158Z"/><path class="w2" d="M358,145L372,129L363,133L351,153Z"/><path class="w2" d="M372,129L386,144L376,129L363,133Z"/><path class="w2" d="M386,144L400,148L389,128L376,129Z"/><path class="w2" d="M400,148L414,125L401,140L389,128Z"/><path class="w2" d="M414,125L428,120L414,123L401,140Z"/><path class="w2" d="M428,120L442,116L427,121L414,123Z"/><path class="w2" d="M442,116L456,129L439,124L427,121Z"/><path class="w2" d="M456,129L470,140L452,130L439,124Z"/><path class="w2" d="M470,140L484,110L465,133L452,130Z"/><path class="w2" d="M484,110L498,106L477,113L465,133Z"/><path class="w2" d="M498,106L512,115L490,116L477,113Z"/><path class="w2" d="M512,115L526,117L503,109L490,116Z"/><path class="w2" d="M526,117L540,85L515,111L503,109Z"/><path class="w2" d="M540,85L553,134L528,123L515,111Z"/><path class="w2" d="M553,134L567,129L541,107L528,123Z"/><path class="w2" d="M223,166L208,159L213,156L227,165Z"/><path class="w2" d="M208,159L192,154L200,142L213,156Z"/><path class="w2" d="M192,154L177,148L186,151L200,142Z"/><path class="w2" d="M177,148L162,149L172,146L186,151Z"/><path class="w2" d="M162,149L146,128L158,143L172,146Z"/><path class="w2" d="M146,128L131,143L144,121L158,143Z"/><path class="w2" d="M131,143L116,146L130,130L144,121Z"/><path class="w2" d="M116,146L100,145L116,112L130,130Z"/><path class="w2" d="M100,145L85,136L102,133L116,112Z"/><path class="w2" d="M85,136L70,110L88,122L102,133Z"/><path class="w2" d="M70,110L54,131L74,143L88,122Z"/><path class="w2" d="M54,131L39,119L60,114L74,143Z"/><path class="w2" d="M39,119L24,113L46,126L60,114Z"/><path class="w2" d="M24,113L8,115L32,116L46,126Z"/><path class="w2" d="M8,115L-7,125L18,119L32,116Z"/><path class="w2" d="M-7,125L-22,113L4,119L18,119Z"/><path class="w2" d="M-22,113L-38,113L-9,115L4,119Z"/><path class="w2" d="M321,166L336,159L331,156L317,165Z"/><path class="w2" d="M336,159L352,146L344,159L331,156Z"/><path class="w2" d="M352,146L367,145L358,145L344,159Z"/><path class="w2" d="M367,145L382,129L372,129L358,145Z"/><path class="w2" d="M382,129L398,138L386,144L372,129Z"/><path class="w2" d="M398,138L413,126L400,148L386,144Z"/><path class="w2" d="M413,126L428,122L414,125L400,148Z"/><path class="w2" d="M428,122L444,116L428,120L414,125Z"/><path class="w2" d="M444,116L459,135L442,116L428,120Z"/><path class="w2" d="M459,135L474,121L456,129L442,116Z"/><path class="w2" d="M474,121L490,109L470,140L456,129Z"/><path class="w2" d="M490,109L505,123L484,110L470,140Z"/><path class="w2" d="M505,123L520,100L498,106L484,110Z"/><path class="w2" d="M520,100L536,79L512,115L498,106Z"/><path class="w2" d="M536,79L551,89L526,117L512,115Z"/><path class="w2" d="M551,89L566,85L540,85L526,117Z"/><path class="w2" d="M218,168L201,157L208,159L223,166Z"/><path class="w2" d="M201,157L184,143L192,154L208,159Z"/><path class="w2" d="M184,143L167,156L177,148L192,154Z"/><path class="w2" d="M167,156L151,133L162,149L177,148Z"/><path class="w2" d="M151,133L134,131L146,128L162,149Z"/><path class="w2" d="M134,131L117,147L131,143L146,128Z"/><path class="w2" d="M117,147L100,124L116,146L131,143Z"/><path class="w2" d="M100,124L83,147L100,145L116,146Z"/><path class="w2" d="M83,147L66,112L85,136L100,145Z"/><path class="w2" d="M66,112L49,116L70,110L85,136Z"/><path class="w2" d="M49,116L33,116L54,131L70,110Z"/><path class="w2" d="M33,116L16,115L39,119L54,131Z"/><path class="w2" d="M16,115L-1,119L24,113L39,119Z"/><path class="w2" d="M-1,119L-18,141L8,115L24,113Z"/><path class="w2" d="M-18,141L-35,116L-7,125L8,115Z"/><path class="w2" d="M326,168L343,152L336,159L321,166Z"/><path class="w2" d="M343,152L360,151L352,146L336,159Z"/><path class="w2" d="M360,151L377,148L367,145L352,146Z"/><path class="w2" d="M377,148L393,129L382,129L367,145Z"/><path class="w2" d="M393,129L410,123L398,138L382,129Z"/><path class="w2" d="M410,123L427,120L413,126L398,138Z"/><path class="w2" d="M427,120L444,136L428,122L413,126Z"/><path class="w2" d="M444,136L461,116L444,116L428,122Z"/><path class="w2" d="M461,116L478,110L459,135L444,116Z"/><path class="w2" d="M478,110L495,108L474,121L459,135Z"/><path class="w2" d="M495,108L511,115L490,109L474,121Z"/><path class="w2" d="M511,115L528,84L505,123L490,109Z"/><path class="w2" d="M528,84L545,133L520,100L505,123Z"/><path class="w2" d="M545,133L562,136L536,79L520,100Z"/><path class="w2" d="M213,171L194,153L201,157L218,168Z"/><path class="w2" d="M194,153L176,152L184,143L201,157Z"/><path class="w2" d="M176,152L157,132L167,156L184,143Z"/><path class="w2" d="M157,132L138,120L151,133L167,156Z"/><path class="w2" d="M138,120L120,104L134,131L151,133Z"/><path class="w2" d="M120,104L101,146L117,147L134,131Z"/><path class="w2" d="M101,146L83,116L100,124L117,147Z"/><path class="w2" d="M83,116L64,113L83,147L100,124Z"/><path class="w2" d="M64,113L46,127L66,112L83,147Z"/><path class="w2" d="M46,127L27,114L49,116L66,112Z"/><path class="w2" d="M27,114L9,114L33,116L49,116Z"/><path class="w2" d="M9,114L-10,113L16,115L33,116Z"/><path class="w2" d="M-10,113L-28,114L-1,119L16,115Z"/><path class="w2" d="M-28,114L-47,139L-18,141L-1,119Z"/><path class="w2" d="M331,171L350,156L343,152L326,168Z"/><path class="w2" d="M350,156L368,134L360,151L343,152Z"/><path class="w2" d="M368,134L387,131L377,148L360,151Z"/><path class="w2" d="M387,131L406,147L393,129L377,148Z"/><path class="w2" d="M406,147L424,121L410,123L393,129Z"/><path class="w2" d="M424,121L443,119L427,120L410,123Z"/><path class="w2" d="M443,119L461,127L444,136L427,120Z"/><path class="w2" d="M461,127L480,110L461,116L444,136Z"/><path class="w2" d="M480,110L498,106L478,110L461,116Z"/><path class="w2" d="M498,106L517,105L495,108L478,110Z"/><path class="w2" d="M517,105L535,82L511,115L495,108Z"/><path class="w2" d="M535,82L554,112L528,84L511,115Z"/><path class="w2" d="M554,112L572,99L545,133L528,84Z"/><path class="w1" d="M207,173L186,162L194,153L213,171Z"/><path class="w1" d="M186,162L166,152L176,152L194,153Z"/><path class="w1" d="M166,152L146,145L157,132L176,152Z"/><path class="w1" d="M146,145L125,109L138,120L157,132Z"/><path class="w1" d="M125,109L105,142L120,104L138,120Z"/><path class="w1" d="M105,142L84,104L101,146L120,104Z"/><path class="w1" d="M84,104L64,111L83,116L101,146Z"/><path class="w1" d="M64,111L43,117L64,113L83,116Z"/><path class="w1" d="M43,117L23,119L46,127L64,113Z"/><path class="w1" d="M23,119L3,113L27,114L46,127Z"/><path class="w1" d="M3,113L-18,113L9,114L27,114Z"/><path class="w1" d="M-18,113L-38,127L-10,113L9,114Z"/><path class="w1" d="M337,173L358,152L350,156L331,171Z"/><path class="w1" d="M358,152L378,135L368,134L350,156Z"/><path class="w1" d="M378,135L398,126L387,131L368,134Z"/><path class="w1" d="M398,126L419,123L406,147L387,131Z"/><path class="w1" d="M419,123L439,118L424,121L406,147Z"/><path class="w1" d="M439,118L460,124L443,119L424,121Z"/><path class="w1" d="M460,124L480,131L461,127L443,119Z"/><path class="w1" d="M480,131L501,106L480,110L461,127Z"/><path class="w1" d="M501,106L521,106L498,106L480,110Z"/><path class="w1" d="M521,106L541,79L517,105L498,106Z"/><path class="w1" d="M541,79L562,79L535,82L517,105Z"/><path class="w1" d="M200,176L178,160L186,162L207,173Z"/><path class="w1" d="M178,160L155,160L166,152L186,162Z"/><path class="w1" d="M155,160L133,146L146,145L166,152Z"/><path class="w1" d="M133,146L110,125L125,109L146,145Z"/><path class="w1" d="M110,125L88,132L105,142L125,109Z"/><path class="w1" d="M88,132L66,110L84,104L105,142Z"/><path class="w1" d="M66,110L43,117L64,111L84,104Z"/><path class="w1" d="M43,117L21,125L43,117L64,111Z"/><path class="w1" d="M21,125L-2,113L23,119L43,117Z"/><path class="w1" d="M-2,113L-24,113L3,113L23,119Z"/><path class="w1" d="M-24,113L-47,114L-18,113L3,113Z"/><path class="w1" d="M344,176L366,164L358,152L337,173Z"/><path class="w1" d="M366,164L389,132L378,135L358,152Z"/><path class="w1" d="M389,132L411,135L398,126L378,135Z"/><path class="w1" d="M411,135L434,119L419,123L398,126Z"/><path class="w1" d="M434,119L456,110L439,118L419,123Z"/><path class="w1" d="M456,110L478,113L460,124L439,118Z"/><path class="w1" d="M478,113L501,106L480,131L460,124Z"/><path class="w1" d="M501,106L523,93L501,106L480,131Z"/><path class="w1" d="M523,93L546,98L521,106L501,106Z"/><path class="w1" d="M546,98L568,121L541,79L521,106Z"/><path class="w1" d="M193,179L168,174L178,160L200,176Z"/><path class="w1" d="M168,174L144,159L155,160L178,160Z"/><path class="w1" d="M144,159L119,148L133,146L155,160Z"/><path class="w1" d="M119,148L94,140L110,125L133,146Z"/><path class="w1" d="M94,140L70,145L88,132L110,125Z"/><path class="w1" d="M70,145L45,117L66,110L88,132Z"/><path class="w1" d="M45,117L20,112L43,117L66,110Z"/><path class="w1" d="M20,112L-4,113L21,125L43,117Z"/><path class="w1" d="M-4,113L-29,114L-2,113L21,125Z"/><path class="w1" d="M-29,114L-54,113L-24,113L-2,113Z"/><path class="w1" d="M351,179L376,160L366,164L344,176Z"/><path class="w1" d="M376,160L400,162L389,132L366,164Z"/><path class="w1" d="M400,162L425,123L411,135L389,132Z"/><path class="w1" d="M425,123L450,152L434,119L411,135Z"/><path class="w1" d="M450,152L474,142L456,110L434,119Z"/><path class="w1" d="M474,142L499,105L478,113L456,110Z"/><path class="w1" d="M499,105L524,108L501,106L478,113Z"/><path class="w1" d="M524,108L548,138L523,93L501,106Z"/><path class="w1" d="M548,138L573,125L546,98L523,93Z"/><path class="w1" d="M185,182L158,170L168,174L193,179Z"/><path class="w1" d="M158,170L131,148L144,159L168,174Z"/><path class="w1" d="M131,148L104,122L119,148L144,159Z"/><path class="w1" d="M104,122L76,166L94,140L119,148Z"/><path class="w1" d="M76,166L49,141L70,145L94,140Z"/><path class="w1" d="M49,141L22,114L45,117L70,145Z"/><path class="w1" d="M22,114L-5,118L20,112L45,117Z"/><path class="w1" d="M-5,118L-32,113L-4,113L20,112Z"/><path class="w1" d="M359,182L386,165L376,160L351,179Z"/><path class="w1" d="M386,165L413,150L400,162L376,160Z"/><path class="w1" d="M413,150L440,160L425,123L400,162Z"/><path class="w1" d="M440,160L468,115L450,152L425,123Z"/><path class="w1" d="M468,115L495,108L474,142L450,152Z"/><path class="w1" d="M495,108L522,100L499,105L474,142Z"/><path class="w1" d="M522,100L549,76L524,108L499,105Z"/><path class="w1" d="M549,76L576,93L548,138L524,108Z"/><path class="w1" d="M176,186L147,163L158,170L185,182Z"/><path class="w1" d="M147,163L117,153L131,148L158,170Z"/><path class="w1" d="M117,153L87,148L104,122L131,148Z"/><path class="w1" d="M87,148L57,134L76,166L104,122Z"/><path class="w1" d="M57,134L27,160L49,141L76,166Z"/><path class="w1" d="M27,160L-3,116L22,114L49,141Z"/><path class="w1" d="M-3,116L-33,113L-5,118L22,114Z"/><path class="w1" d="M368,186L397,173L386,165L359,182Z"/><path class="w1" d="M397,173L427,155L413,150L386,165Z"/><path class="w1" d="M427,155L457,156L440,160L413,150Z"/><path class="w1" d="M457,156L487,118L468,115L440,160Z"/><path class="w1" d="M487,118L517,105L495,108L468,115Z"/><path class="w1" d="M517,105L547,80L522,100L495,108Z"/><path class="w1" d="M547,80L577,125L549,76L522,100Z"/><path class="w1" d="M167,190L134,164L147,163L176,186Z"/><path class="w1" d="M134,164L101,149L117,153L147,163Z"/><path class="w1" d="M101,149L68,121L87,148L117,153Z"/><path class="w1" d="M68,121L35,143L57,134L87,148Z"/><path class="w1" d="M35,143L3,114L27,160L57,134Z"/><path class="w1" d="M3,114L-30,115L-3,116L27,160Z"/><path class="w1" d="M377,190L410,178L397,173L368,186Z"/><path class="w1" d="M410,178L443,173L427,155L397,173Z"/><path class="w1" d="M443,173L476,149L457,156L427,155Z"/><path class="w1" d="M476,149L509,163L487,118L457,156Z"/><path class="w1" d="M509,163L541,155L517,105L487,118Z"/><path class="w1" d="M541,155L574,149L547,80L517,105Z"/><path class="w1" d="M156,194L120,178L134,164L167,190Z"/><path class="w1" d="M120,178L84,164L101,149L134,164Z"/><path class="w1" d="M84,164L48,121L68,121L101,149Z"/><path class="w1" d="M48,121L12,158L35,143L68,121Z"/><path class="w1" d="M12,158L-24,131L3,114L35,143Z"/><path class="w1" d="M-24,131L-61,133L-30,115L3,114Z"/><path class="w1" d="M388,194L424,181L410,178L377,190Z"/><path class="w1" d="M424,181L460,181L443,173L410,178Z"/><path class="w1" d="M460,181L496,141L476,149L443,173Z"/><path class="w1" d="M496,141L532,143L509,163L476,149Z"/><path class="w1" d="M532,143L568,164L541,155L509,163Z"/><path class="w0" d="M145,199L105,177L120,178L156,194Z"/><path class="w0" d="M105,177L65,170L84,164L120,178Z"/><path class="w0" d="M65,170L25,159L48,121L84,164Z"/><path class="w0" d="M25,159L-14,137L12,158L48,121Z"/><path class="w0" d="M-14,137L-54,113L-24,131L12,158Z"/><path class="w0" d="M399,199L439,188L424,181L388,194Z"/><path class="w0" d="M439,188L479,183L460,181L424,181Z"/><path class="w0" d="M479,183L519,181L496,141L460,181Z"/><path class="w0" d="M519,181L558,106L532,143L496,141Z"/><path class="w0" d="M558,106L598,97L568,164L532,143Z"/><path class="w0" d="M132,204L88,190L105,177L145,199Z"/><path class="w0" d="M88,190L45,158L65,170L105,177Z"/><path class="w0" d="M45,158L1,145L25,159L65,170Z"/><path class="w0" d="M1,145L-43,120L-14,137L25,159Z"/><path class="w0" d="M412,204L456,194L439,188L399,199Z"/><path class="w0" d="M456,194L499,175L479,183L439,188Z"/><path class="w0" d="M499,175L543,181L519,181L479,183Z"/><path class="w0" d="M543,181L587,153L558,106L519,181Z"/><path class="w0" d="M118,210L70,181L88,190L132,204Z"/><path class="w0" d="M70,181L22,165L45,158L88,190Z"/><path class="w0" d="M22,165L-26,121L1,145L45,158Z"/><path class="w0" d="M-26,121L-74,121L-43,120L1,145Z"/><path class="w0" d="M426,210L474,200L456,194L412,204Z"/><path class="w0" d="M474,200L522,181L499,175L456,194Z"/><path class="w0" d="M522,181L570,153L543,181L499,175Z"/><path class="w0" d="M103,217L50,188L70,181L118,210Z"/><path class="w0" d="M50,188L-3,174L22,165L70,181Z"/><path class="w0" d="M-3,174L-56,143L-26,121L22,165Z"/><path class="w0" d="M441,217L494,199L474,200L426,210Z"/><path class="w0" d="M494,199L547,199L522,181L474,200Z"/><path class="w0" d="M547,199L600,177L570,153L522,181Z"/><path class="w0" d="M86,224L28,194L50,188L103,217Z"/><path class="w0" d="M28,194L-31,194L-3,174L50,188Z"/><path class="w0" d="M458,224L516,212L494,199L441,217Z"/><path class="w0" d="M516,212L575,210L547,199L494,199Z"/><path class="w0" d="M67,231L3,201L28,194L86,224Z"/><path class="w0" d="M3,201L-61,163L-31,194L28,194Z"/><path class="w0" d="M477,231L541,210L516,212L458,224Z"/><path class="w0" d="M541,210L605,186L575,210L516,212Z"/><path class="w0" d="M47,240L-24,210L3,201L67,231Z"/><path class="w0" d="M-24,210L-94,180L-61,163L3,201Z"/><path class="w0" d="M497,240L568,219L541,210L477,231Z"/><path class="w0" d="M24,249L-53,228L-24,210L47,240Z"/><path class="w0" d="M520,249L597,225L568,219L497,240Z"/><path class="w0" d="M-1,260L-86,249L-53,228L24,249Z"/><path class="w0" d="M545,260L630,242L597,225L520,249Z"/><path class="w0" d="M-28,271L-122,248L-86,249L-1,260Z"/>
<path d="M272,146 L229,155 L158,185 L140,206 L13,235 L0,240 L0,298 L531,298 L531,233 L463,212 L398,185 L329,161Z" fill="#000"/>
<ellipse cx="335" cy="163" rx="70" ry="7" fill="url(#gl)" transform="rotate(12 335 163)" opacity="0.95"/>
<rect x="460" y="190" width="3" height="2.5" fill="#30c8ff"/>
<rect x="64" y="194" width="3" height="2.5" fill="#30c8ff"/>
<rect x="52" y="135" width="3" height="2.5" fill="#40e080"/>
<rect x="156" y="143" width="3" height="2.5" fill="#30c8ff"/>
<rect x="86" y="150" width="3" height="2.5" fill="#30c8ff"/>
<rect x="344" y="164" width="3" height="2.5" fill="#30c8ff"/>
<rect x="337" y="141" width="3" height="2.5" fill="#ff3080"/>
<rect x="77" y="206" width="3" height="2.5" fill="#30c8ff"/>
<rect x="174" y="176" width="3" height="2.5" fill="#30c8ff"/>
<rect x="196" y="170" width="3" height="2.5" fill="#30c8ff"/>
<rect x="372" y="150" width="3" height="2.5" fill="#30c8ff"/>
<rect x="179" y="146" width="3" height="2.5" fill="#30c8ff"/>
<rect x="113" y="171" width="3" height="2.5" fill="#ff3080"/>
<rect x="383" y="148" width="3" height="2.5" fill="#ffa030"/>
<rect x="136" y="172" width="3" height="2.5" fill="#ff3080"/>
<rect x="507" y="123" width="3" height="2.5" fill="#ffa030"/>
<rect x="316" y="157" width="3" height="2.5" fill="#ffa030"/>
<rect x="428" y="130" width="3" height="2.5" fill="#ff3080"/>
<rect x="107" y="196" width="3" height="2.5" fill="#ff3080"/>
<rect x="46" y="215" width="3" height="2.5" fill="#ffa030"/>
<rect x="491" y="143" width="3" height="2.5" fill="#40e080"/>
<rect x="114" y="178" width="3" height="2.5" fill="#ffa030"/>
<rect x="319" y="161" width="3" height="2.5" fill="#ff3080"/>
<rect x="164" y="164" width="3" height="2.5" fill="#30c8ff"/>
<ellipse cx="67" cy="205" rx="41.800000000000004" ry="31.2" fill="url(#rg)"/>
<ellipse cx="67" cy="205" rx="19" ry="13" fill="#ff2a80"/>
<ellipse cx="7" cy="137" rx="7" ry="6" fill="#ff2a70"/>
<ellipse cx="61" cy="124" rx="5" ry="5" fill="#ff3080"/>
<ellipse cx="112" cy="112" rx="4" ry="4" fill="#ff3080"/>
<ellipse cx="147" cy="173" rx="8" ry="6" fill="#20d0ff"/>
<ellipse cx="168" cy="169" rx="6" ry="5" fill="#30c8ff"/>
<ellipse cx="189" cy="212" rx="10" ry="5" fill="#28c8ff"/>
<ellipse cx="205" cy="181" rx="5" ry="3" fill="#ff3070"/>
<ellipse cx="146" cy="144" rx="4" ry="4" fill="#ffa030"/>
<ellipse cx="141" cy="152" rx="5" ry="4" fill="#ff3080"/>
<ellipse cx="417" cy="174" rx="7" ry="4" fill="#ff3080"/>
<ellipse cx="409" cy="179" rx="7" ry="5" fill="#30e070"/>
<ellipse cx="436" cy="173" rx="7" ry="5" fill="#30b8ff"/>
<ellipse cx="436" cy="203" rx="8" ry="3.5" fill="#ff8a20"/>
<ellipse cx="469" cy="218" rx="11" ry="6" fill="#20b0ff"/>
<ellipse cx="457" cy="139" rx="3" ry="3" fill="#30c0ff"/>
<ellipse cx="469" cy="121" rx="3" ry="3" fill="#30c0ff"/>
<ellipse cx="487" cy="120" rx="2" ry="2" fill="#ff3080"/>
<ellipse cx="207" cy="168" rx="3" ry="3" fill="#ff9a30"/>
<path d="M56,229h22v5h-22zM49,240h20v4h-20zM63,251h16v4h-16zM57,264h14v3h-14z" fill="#e01860" opacity="0.7" filter="url(#bb)"/>
</svg>
<div class="a" style="left:869px;top:389px;width:333px;height:22px;background:#2a4aa8;border-radius:3px"></div>
<div class="t" style="left:873px;top:394px;font-size:13px;color:#f8f8f8;word-spacing:2.3px;letter-spacing:0.3px;-webkit-text-stroke:0.1px #f8f8f8">Welcome to our <span style="color:#f5be12;-webkit-text-stroke:0.1px #f5be12">exploration</span> of AI technology, where</div>
<div class="a" style="left:777px;top:449px;width:515px;height:4px;border-radius:2px;background:#858585"></div>
<div class="a" style="left:773px;top:445px;width:12px;height:12px;border-radius:6px;background:#f6b12a"></div>
<svg class="a" style="left:782px;top:462px" width="10" height="11" viewBox="0 0 10 11"><path d="M0.5 0.5L9.5 5.5 0.5 10.5z" fill="#333"/></svg>
<div class="t" style="left:810.5px;top:462px;font-size:10px;color:#444;-webkit-text-stroke:0.3px #444">0:00 / 0:08</div>

<!-- BOTTOM -->
<div class="a" style="left:0;top:501px;width:1347px;height:1px;background:#dcdcdc"></div>
<div class="a" style="left:1303px;top:508px;width:60px;height:17px;border:1px solid #dcdcdc;border-radius:9px;background:#fff"></div>
<svg class="a" style="left:1310px;top:511px" width="10" height="10" viewBox="0 0 10 10"><path d="M4.3 0h1.4v4.3H10v1.4H5.7V10H4.3V5.7H0V4.3h4.3z" fill="#777"/></svg>
<div class="t" style="left:1326px;top:512px;font-size:9.5px;color:#444">Scene</div>
<div class="th" style="left:24.8px">
<div class="fr"></div>
<div class="im" style="background:#fdfdfd"><div class="t" style="left:0;width:77px;text-align:center;top:15px;font-size:12px;font-weight:bold;color:#6a94e6;letter-spacing:0.6px">Visla</div></div>
<div class="nm">Intro</div><div class="dt">&#8226;&#8226;&#8226;</div>
</div>
<div class="th" style="left:127.0px;top:533.5px;width:89px;height:69px;border:1px solid #3d9be9;background:#4aa3f0">
<div class="fr" style="background:#bddcf6"></div>
<div class="im" style="background:#05070c;left:5px;top:5.5px"><svg width="77.5" height="42" viewBox="0 0 531 298" preserveAspectRatio="none" style="position:absolute;left:0;top:0"><rect width="531" height="298" fill="url(#sky)"/><circle cx="267" cy="72" r="110" fill="url(#halo)"/><circle cx="267" cy="72" r="86" fill="url(#sun)" opacity=".9"/><path d="M0,120 L60,100 L105,88 L150,118 L200,130 L272,146 L340,125 L420,110 L525,80 L531,80 L531,298 L0,298Z" fill="#15151c"/><path d="M272,146 L0,250 L0,298 L531,298 L531,240Z" fill="#030303"/><path d="M0,130L272,146M0,170L272,146M0,210L272,146M531,120L272,146M531,170L272,146M531,210L272,146M40,110L90,250M120,110L160,200M420,115L400,200M480,100L470,220" stroke="#9a9aa0" stroke-width="5" opacity=".55"/><path d="M272,146 L420,180 L531,200" stroke="#e8f0e8" stroke-width="8" opacity=".5" fill="none"/><ellipse cx="67" cy="200" rx="45" ry="35" fill="url(#rg)"/><ellipse cx="67" cy="200" rx="28" ry="20" fill="#ff2a80"/><ellipse cx="140" cy="165" rx="16" ry="12" fill="#20c8ff"/><ellipse cx="190" cy="205" rx="14" ry="10" fill="#20c8ff"/><ellipse cx="460" cy="215" rx="18" ry="10" fill="#20b0ff"/></svg><svg style="position:absolute;right:0;top:0" width="14" height="14" viewBox="0 0 14 14"><path d="M0 0h14v14z" fill="#f27b2f"/><rect x="8.6" y="1.6" width="2.2" height="4" rx="1.1" fill="#fff"/><path d="M7.8 4.6a1.9 1.9 0 0 0 3.8 0M9.7 6.5v1.6" fill="none" stroke="#fff" stroke-width=".7"/></svg></div>
<div class="nm" style="color:#fff;font-weight:bold">Scene 1</div><div class="dt" style="color:#fff">&#8226;&#8226;&#8226;</div>
</div>
<div class="th" style="left:231.2px">
<div class="fr"></div>
<div class="im" style="background:linear-gradient(180deg,#46545c 0%,#52626a 30%,#5e6e74 55%,#6a7a80 75%,#9aacac 90%,#a0b0b0 100%)"><div class="a" style="left:0px;top:0px;width:77px;height:42px;background:radial-gradient(ellipse at 80% 70%,rgba(200,210,210,.55) 0%,rgba(200,210,210,0) 45%);"></div><div class="a" style="left:0px;top:30px;width:40px;height:12px;background:radial-gradient(ellipse at 30% 80%,rgba(190,205,205,.8) 0%,rgba(190,205,205,0) 70%);"></div><div class="a" style="left:33px;top:3px;width:9px;height:39px;background:repeating-linear-gradient(180deg,#5a3024 0 2px,#4a2418 2px 3px);border-radius:2px 2px 0 0"></div><svg style="position:absolute;right:0;top:0" width="14" height="14" viewBox="0 0 14 14"><path d="M0 0h14v14z" fill="#f27b2f"/><rect x="8.6" y="1.6" width="2.2" height="4" rx="1.1" fill="#fff"/><path d="M7.8 4.6a1.9 1.9 0 0 0 3.8 0M9.7 6.5v1.6" fill="none" stroke="#fff" stroke-width=".7"/></svg></div>
<div class="nm">Scene 2</div><div class="dt">&#8226;&#8226;&#8226;</div>
</div>
<div class="th" style="left:334.5px">
<div class="fr"></div>
<div class="im" style="background:linear-gradient(90deg,#e6cfc0 0%,#dcc0a8 20%,#caa07c 40%,#c8a488 55%,#d6bcaa 75%,#e2cfc2 100%)"><div class="a" style="left:10px;top:3px;width:40px;height:36px;background:radial-gradient(ellipse at 50% 50%,rgba(150,90,40,.75) 0%,rgba(170,110,60,.35) 50%,rgba(0,0,0,0) 75%);"></div><div class="a" style="left:36px;top:2px;width:40px;height:40px;background:radial-gradient(circle,rgba(60,40,30,.7) 0.5px,rgba(0,0,0,0) 1px),radial-gradient(circle,rgba(90,60,40,.6) 0.6px,rgba(0,0,0,0) 1.1px);background-size:4px 3px,5px 7px;background-position:0 0,2px 1px;opacity:.7;-webkit-mask-image:radial-gradient(ellipse at 40% 50%,#000 30%,transparent 75%)"></div><svg style="position:absolute;right:0;top:0" width="14" height="14" viewBox="0 0 14 14"><path d="M0 0h14v14z" fill="#f27b2f"/><rect x="8.6" y="1.6" width="2.2" height="4" rx="1.1" fill="#fff"/><path d="M7.8 4.6a1.9 1.9 0 0 0 3.8 0M9.7 6.5v1.6" fill="none" stroke="#fff" stroke-width=".7"/></svg></div>
<div class="nm">Scene 3</div><div class="dt">&#8226;&#8226;&#8226;</div>
</div>
<div class="th" style="left:437.7px">
<div class="fr"></div>
<div class="im" style="background:radial-gradient(ellipse at 40% 55%,#0e2a1c 0%,#0a1a12 55%,#060c09 100%)"><div class="a" style="left:8px;top:30px;width:6px;height:5px;background:#40d060;border-radius:3px;box-shadow:0 0 4px #40d060"></div><div class="a" style="left:25px;top:21px;width:4px;height:3px;background:#2a8a4a;border-radius:2px"></div><div class="a" style="left:52px;top:17px;width:4px;height:3px;background:#2a8a4a;border-radius:2px"></div><div class="a" style="left:35px;top:28px;width:3px;height:2px;background:#1e6a3a;"></div><svg style="position:absolute;right:0;top:0" width="14" height="14" viewBox="0 0 14 14"><path d="M0 0h14v14z" fill="#f27b2f"/><rect x="8.6" y="1.6" width="2.2" height="4" rx="1.1" fill="#fff"/><path d="M7.8 4.6a1.9 1.9 0 0 0 3.8 0M9.7 6.5v1.6" fill="none" stroke="#fff" stroke-width=".7"/></svg></div>
<div class="nm">Scene 4</div><div class="dt">&#8226;&#8226;&#8226;</div>
</div>
<div class="th" style="left:540.9px">
<div class="fr"></div>
<div class="im" style="background:linear-gradient(170deg,#f0f0f0 0%,#e2e2e2 40%,#d4d4d4 70%,#cacaca 100%)"><div class="a" style="left:0px;top:0px;width:30px;height:16px;background:linear-gradient(180deg,#f4f4f4,#dcdcdc);opacity:.9"></div><div class="a" style="left:2px;top:14px;width:40px;height:2px;background:#5a5a5a;transform:rotate(-20deg);transform-origin:0 0;top:18px"></div><div class="a" style="left:0px;top:30px;width:12px;height:12px;background:#1c1c1c;transform:skewX(-8deg)"></div><div class="a" style="left:62px;top:33px;width:12px;height:6px;background:#2a2a2a;transform:rotate(30deg)"></div><svg style="position:absolute;right:0;top:0" width="14" height="14" viewBox="0 0 14 14"><path d="M0 0h14v14z" fill="#f27b2f"/><rect x="8.6" y="1.6" width="2.2" height="4" rx="1.1" fill="#fff"/><path d="M7.8 4.6a1.9 1.9 0 0 0 3.8 0M9.7 6.5v1.6" fill="none" stroke="#fff" stroke-width=".7"/></svg></div>
<div class="nm">Scene 5</div><div class="dt">&#8226;&#8226;&#8226;</div>
</div>
<div class="th" style="left:644.1px">
<div class="fr"></div>
<div class="im" style="background:linear-gradient(90deg,#5a6a84 0%,#6a7890 30%,#2a3040 44%,#3a4252 52%,#808890 62%,#a0a6ac 100%)"><div class="a" style="left:8px;top:6px;width:12px;height:9px;background:#c0c4cc;border:2px solid #3a4050"></div><div class="a" style="left:43px;top:28px;width:34px;height:14px;background:#c8ccd0;opacity:.8"></div><svg style="position:absolute;right:0;top:0" width="14" height="14" viewBox="0 0 14 14"><path d="M0 0h14v14z" fill="#f27b2f"/><rect x="8.6" y="1.6" width="2.2" height="4" rx="1.1" fill="#fff"/><path d="M7.8 4.6a1.9 1.9 0 0 0 3.8 0M9.7 6.5v1.6" fill="none" stroke="#fff" stroke-width=".7"/></svg></div>
<div class="nm">Scene 6</div><div class="dt">&#8226;&#8226;&#8226;</div>
</div>
<div class="th" style="left:747.3px">
<div class="fr"></div>
<div class="im" style="background:linear-gradient(90deg,#f2f2f2 0%,#e8e6ea 20%,#d8d0d8 35%,#e8e0e4 55%,#f0eeee 100%)"><div class="a" style="left:14px;top:6px;width:14px;height:36px;background:linear-gradient(180deg,#f08030,#a02080 50%,#501070);border-radius:7px;transform:rotate(20deg)"></div><div class="a" style="left:30px;top:0px;width:10px;height:30px;background:linear-gradient(180deg,#f05020,#c02040);border-radius:5px;transform:rotate(-25deg)"></div><div class="a" style="left:38px;top:20px;width:10px;height:22px;background:linear-gradient(180deg,#a8e060,#40a040);border-radius:5px;opacity:.8"></div><div class="a" style="left:58px;top:12px;width:5px;height:4px;background:#40c040;border-radius:2px"></div><svg style="position:absolute;right:0;top:0" width="14" height="14" viewBox="0 0 14 14"><path d="M0 0h14v14z" fill="#f27b2f"/><rect x="8.6" y="1.6" width="2.2" height="4" rx="1.1" fill="#fff"/><path d="M7.8 4.6a1.9 1.9 0 0 0 3.8 0M9.7 6.5v1.6" fill="none" stroke="#fff" stroke-width=".7"/></svg></div>
<div class="nm">Scene 7</div><div class="dt">&#8226;&#8226;&#8226;</div>
</div>
<div class="th" style="left:850.6px">
<div class="fr"></div>
<div class="im" style="background:linear-gradient(180deg,#2a2e32 0%,#1e2226 45%,#14171a 100%)"><div class="a" style="left:0px;top:2px;width:44px;height:6px;background:repeating-linear-gradient(90deg,#8a9096 0 8px,#2a2e32 8px 10px);opacity:.7"></div><div class="a" style="left:0px;top:12px;width:44px;height:6px;background:repeating-linear-gradient(90deg,#6a7076 0 8px,#2a2e32 8px 10px);opacity:.6"></div><div class="a" style="left:18px;top:26px;width:40px;height:6px;background:#5a7a9a;opacity:.7"></div><svg style="position:absolute;right:0;top:0" width="14" height="14" viewBox="0 0 14 14"><path d="M0 0h14v14z" fill="#f27b2f"/><rect x="8.6" y="1.6" width="2.2" height="4" rx="1.1" fill="#fff"/><path d="M7.8 4.6a1.9 1.9 0 0 0 3.8 0M9.7 6.5v1.6" fill="none" stroke="#fff" stroke-width=".7"/></svg></div>
<div class="nm">Scene 8</div><div class="dt">&#8226;&#8226;&#8226;</div>
</div>
<div class="th" style="left:953.8px">
<div class="fr"></div>
<div class="im" style="background:linear-gradient(90deg,#d8d0c0 0%,#d4ccb8 40%,#cabc9e 70%,#c8bea8 100%)"><div class="a" style="left:18px;top:0px;width:22px;height:42px;background:linear-gradient(180deg,#8a7060,#6a5040 50%,#a04030);opacity:.8"></div><div class="a" style="left:27px;top:8px;width:20px;height:20px;background:#f0ece4;border-radius:10px;border:2px solid #c8c0b0"></div><div class="a" style="left:52px;top:8px;width:16px;height:14px;background:#c09860;transform:rotate(-15deg)"></div><svg style="position:absolute;right:0;top:0" width="14" height="14" viewBox="0 0 14 14"><path d="M0 0h14v14z" fill="#f27b2f"/><rect x="8.6" y="1.6" width="2.2" height="4" rx="1.1" fill="#fff"/><path d="M7.8 4.6a1.9 1.9 0 0 0 3.8 0M9.7 6.5v1.6" fill="none" stroke="#fff" stroke-width=".7"/></svg></div>
<div class="nm">Scene 9</div><div class="dt">&#8226;&#8226;&#8226;</div>
</div>
<div class="th" style="left:1057.0px">
<div class="fr"></div>
<div class="im" style="background:radial-gradient(ellipse at 50% 50%,#c8b8a0 0%,#d8d0c8 50%,#e8e6e4 100%)"><div class="a" style="left:2px;top:24px;width:20px;height:16px;background:#5a2a30;border-radius:8px"></div><div class="a" style="left:14px;top:8px;width:10px;height:10px;background:#6a4a30;border-radius:5px"></div><div class="a" style="left:30px;top:2px;width:10px;height:9px;background:#5a5040;border-radius:5px"></div><div class="a" style="left:50px;top:20px;width:12px;height:12px;background:#303030;opacity:.7"></div><div class="a" style="left:40px;top:6px;width:14px;height:10px;background:#f0f0f0;opacity:.8"></div><svg style="position:absolute;right:0;top:0" width="14" height="14" viewBox="0 0 14 14"><path d="M0 0h14v14z" fill="#f27b2f"/><rect x="8.6" y="1.6" width="2.2" height="4" rx="1.1" fill="#fff"/><path d="M7.8 4.6a1.9 1.9 0 0 0 3.8 0M9.7 6.5v1.6" fill="none" stroke="#fff" stroke-width=".7"/></svg></div>
<div class="nm">Scene 10</div><div class="dt">&#8226;&#8226;&#8226;</div>
</div>
<div class="th" style="left:1160.2px">
<div class="fr"></div>
<div class="im" style="background:linear-gradient(180deg,#141414 0%,#181818 50%,#101010 100%)"><div class="a" style="left:30px;top:16px;width:12px;height:12px;background:transparent;border:1px solid #3a3a3a"></div><div class="a" style="left:10px;top:8px;width:4px;height:4px;background:transparent;border:1px solid #2a2a2a"></div><svg style="position:absolute;right:0;top:0" width="14" height="14" viewBox="0 0 14 14"><path d="M0 0h14v14z" fill="#f27b2f"/><rect x="8.6" y="1.6" width="2.2" height="4" rx="1.1" fill="#fff"/><path d="M7.8 4.6a1.9 1.9 0 0 0 3.8 0M9.7 6.5v1.6" fill="none" stroke="#fff" stroke-width=".7"/></svg></div>
<div class="nm">Scene 11</div><div class="dt">&#8226;&#8226;&#8226;</div>
</div>
<div class="th" style="left:1263.4px">
<div class="fr"></div>
<div class="im" style="background:linear-gradient(180deg,#b4bec4 0%,#8a969c 22%,#58646a 45%,#3a4448 70%,#2a3236 100%)"><div class="a" style="left:0px;top:12px;width:20px;height:30px;background:#3a4448;opacity:.8"></div><div class="a" style="left:22px;top:8px;width:8px;height:34px;background:#4a545a;"></div><div class="a" style="left:34px;top:0px;width:6px;height:42px;background:#283034;"></div><div class="a" style="left:44px;top:0px;width:6px;height:42px;background:#2a3236;"></div><div class="a" style="left:60px;top:0px;width:8px;height:42px;background:#20282c;"></div><div class="a" style="left:0px;top:32px;width:77px;height:10px;background:#2a3034;opacity:.6"></div><svg style="position:absolute;right:0;top:0" width="14" height="14" viewBox="0 0 14 14"><path d="M0 0h14v14z" fill="#f27b2f"/><rect x="8.6" y="1.6" width="2.2" height="4" rx="1.1" fill="#fff"/><path d="M7.8 4.6a1.9 1.9 0 0 0 3.8 0M9.7 6.5v1.6" fill="none" stroke="#fff" stroke-width=".7"/></svg></div>
<div class="nm">Scene 12</div><div class="dt">&#8226;&#8226;&#8226;</div>
</div>
<div class="a" style="left:24px;top:611px;width:1321px;height:20px;background:#bfdffa;border-radius:6px"></div>
<svg class="a" style="left:32px;top:615px" width="8" height="11" viewBox="0 0 8 11"><path d="M3.5 0H8v2.5H5.2v6.2A2.4 2.4 0 1 1 3.5 6.6z" fill="#4a9ee8"/></svg>
<div class="t" style="left:49px;top:616px;font-size:9.8px;color:#444">1:35&nbsp;&nbsp;CHILL BEATS 5</div>
<svg class="a" style="left:634px;top:615px" width="12" height="11" viewBox="0 0 12 11"><path d="M0 3.5h2.5L6 0.5v10L2.5 7.5H0z" fill="#6e6e6e"/><path d="M8 3a3 3 0 0 1 0 5M9.5 1.5a5 5 0 0 1 0 8" fill="none" stroke="#6e6e6e" stroke-width="1.2"/></svg>
<svg class="a" style="left:664px;top:614px" width="12" height="12" viewBox="0 0 12 12"><path d="M3.5 0.5H7v2H5v6.5A2.3 2.3 0 1 1 3.5 7z" fill="#6e6e6e"/><circle cx="9" cy="9.2" r="2.3" fill="#6e6e6e"/></svg>
<svg class="a" style="left:693px;top:614px" width="15" height="12" viewBox="0 0 15 12"><path d="M3.5 0.5H7v2H5v6.5A2.3 2.3 0 1 1 3.5 7z" fill="#6e6e6e"/><path d="M9.5 6.5a2.6 2.6 0 1 0 2.6-1.8" fill="none" stroke="#6e6e6e" stroke-width="1.2"/><path d="M11 3l2.5 1.5-2 2z" fill="#6e6e6e"/></svg>
<svg class="a" style="left:726px;top:615px" width="9" height="11" viewBox="0 0 9 11"><rect x="0" y="0" width="9" height="1.5" fill="#6e6e6e"/><rect x="3" y="-0.5" width="3" height="1" fill="#6e6e6e"/><path d="M0.8 2h7.4v9H0.8z" fill="#6e6e6e"/><rect x="2.6" y="3" width="0.8" height="7" fill="#bfdffa" opacity=".5"/><rect x="5.6" y="3" width="0.8" height="7" fill="#bfdffa" opacity=".5"/></svg>
</body></html>
